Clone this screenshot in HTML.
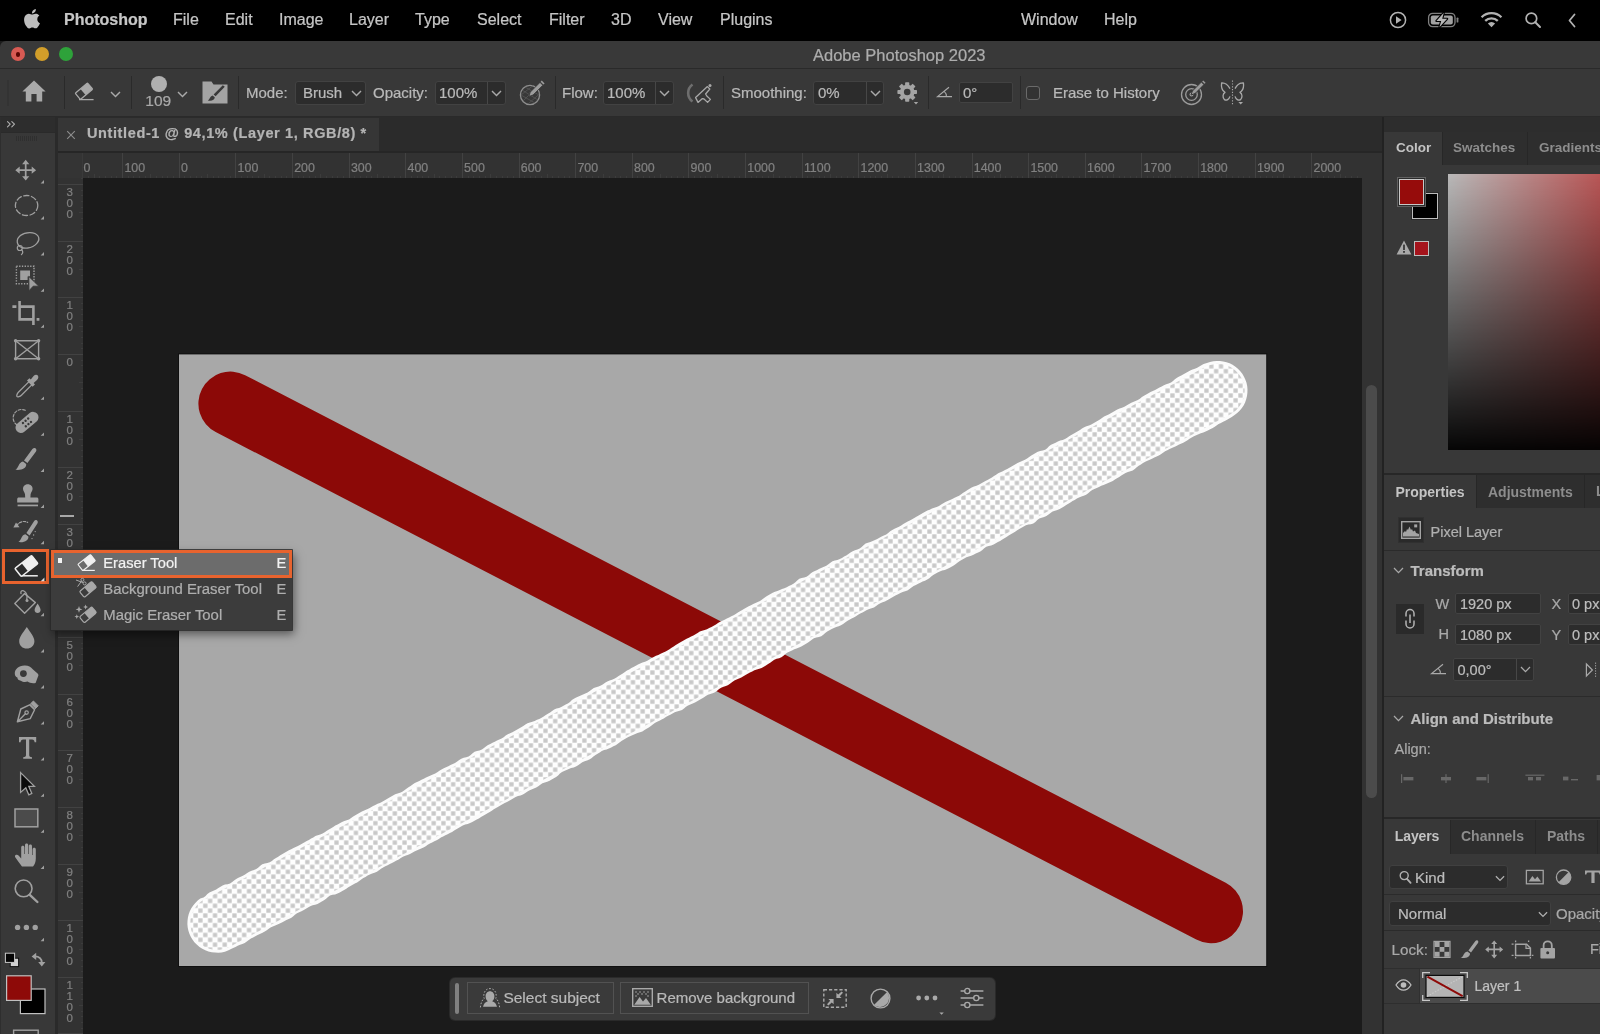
<!DOCTYPE html>
<html lang="en">
<head>
<meta charset="utf-8">
<title>Adobe Photoshop 2023</title>
<style>
*{box-sizing:border-box;margin:0;padding:0}
html,body{width:1600px;height:1034px;overflow:hidden;background:#1b1b1b}
body{position:relative;font-family:"Liberation Sans",sans-serif;color:#b4b4b4;font-size:14px;-webkit-font-smoothing:antialiased}
.a{position:absolute}
.t{position:absolute;white-space:nowrap;line-height:1;-webkit-text-stroke:0.22px currentColor}
svg{position:absolute;overflow:visible}
/* menu bar */
#menubar{left:0;top:0;width:1600px;height:41px;background:#000}
#menubar .t{top:12px;font-size:16px;color:#c6c6c6}
/* window */
#titlebar{left:0;top:41px;width:1600px;height:27px;background:#393939;border-top-left-radius:6px}
#optbar{left:0;top:69px;width:1600px;height:47px;background:#383838}
#optbar .t{font-size:15px;color:#b9b9b9;top:16px}
.box{position:absolute;background:#2c2c2c;border:1px solid #424242;border-radius:3px}
.sep{position:absolute;width:1px;top:7px;height:33px;background:#2a2a2a}
/* tool bar */
#tools{left:0;top:117px;width:55px;height:917px;background:#383838}
/* doc */
#tabbar{left:58px;top:117px;width:1324px;height:34px;background:#2b2b2b}
#tab{left:0;top:0.6px;width:321px;height:33.4px;background:#363636}
#hruler{left:58px;top:152.5px;width:1304px;height:25.5px;background:#323232;overflow:hidden}
#vruler{left:58px;top:178px;width:25px;height:856px;background:#323232;overflow:hidden}
#hruler .t,#vruler .t{font-size:12.4px;color:#808080}
#stage{left:83px;top:178px;width:1279px;height:856px;background:#1b1b1b;overflow:hidden}
#vscroll{left:1362px;top:152.5px;width:19.6px;height:882px;background:#323232}
/* panels */
#panels{left:1384.3px;top:117px;width:215.7px;height:917px;background:#383838;overflow:hidden}
.ptabs{position:absolute;left:-1px;width:217px;height:33px;background:#2e2e2e}
.ptab{position:absolute;top:0;height:33px;font-size:13.5px;font-weight:bold;color:#8d8d8d;line-height:32px;padding-left:11px;border-right:1px solid #272727}
.ptab.on{background:#383838;color:#c4c4c4}
</style>
</head>
<body>
<div id="root" style="position:absolute;left:0;top:0;width:1600px;height:1034px;will-change:transform">
<div id="menubar" class="a">
<svg style="left:23.6px;top:9px" width="16.4" height="19.4" viewBox="2.5 0 19.5 24"><path fill="#bdbdbd" d="M12.152 6.896c-.948 0-2.415-1.078-3.96-1.04-2.04.027-3.91 1.183-4.961 3.014-2.117 3.675-.546 9.103 1.519 12.09 1.013 1.454 2.208 3.09 3.792 3.039 1.52-.065 2.09-.987 3.935-.987 1.831 0 2.35.987 3.96.948 1.637-.026 2.676-1.48 3.676-2.948 1.156-1.688 1.636-3.325 1.662-3.415-.039-.013-3.182-1.221-3.22-4.857-.026-3.04 2.48-4.494 2.597-4.559-1.429-2.09-3.623-2.324-4.39-2.376-2-.156-3.675 1.09-4.61 1.09zM15.53 3.83c.843-1.012 1.4-2.427 1.245-3.83-1.207.052-2.662.805-3.532 1.818-.78.896-1.454 2.338-1.273 3.714 1.338.104 2.715-.688 3.559-1.701"/></svg>
<span class="t" style="left:64px;font-weight:bold;font-size:16px">Photoshop</span>
<span class="t" style="left:173px">File</span>
<span class="t" style="left:225px">Edit</span>
<span class="t" style="left:279px">Image</span>
<span class="t" style="left:349px">Layer</span>
<span class="t" style="left:415px">Type</span>
<span class="t" style="left:477px">Select</span>
<span class="t" style="left:549px">Filter</span>
<span class="t" style="left:611px">3D</span>
<span class="t" style="left:658px">View</span>
<span class="t" style="left:720px">Plugins</span>
<span class="t" style="left:1021px">Window</span>
<span class="t" style="left:1104px">Help</span>
<!-- status icons -->
<svg style="left:1388px;top:10px" width="20" height="20" viewBox="0 0 20 20"><circle cx="10" cy="10" r="7.6" fill="none" stroke="#b2b2b2" stroke-width="1.5"/><path d="M8 6.3 L13.6 10 L8 13.7Z" fill="#b2b2b2"/></svg>
<svg style="left:1427px;top:12px" width="34" height="16" viewBox="0 0 34 16"><rect x="1.600" y="1.400" width="26.400" height="13.200" rx="4" fill="none" stroke="#808080" stroke-width="1.300"/><rect x="3.800" y="3.600" width="22" height="8.800" rx="2" fill="#a2a2a2"/><rect x="29.600" y="5.400" width="1.800" height="5.200" rx="0.900" fill="#808080"/><path d="M16.800 0.800 L9.400 9 H14.200 L12.400 15.200 L20.200 6.800 H15.200 Z" fill="#000" stroke="#000" stroke-width="2.200" stroke-linejoin="round"/><path d="M16.800 0.800 L9.400 9 H14.200 L12.400 15.200 L20.200 6.800 H15.200 Z" fill="#b8b8b8"/></svg>
<svg style="left:1480px;top:11px" width="23" height="17" viewBox="0 0 23 17"><g fill="none" stroke="#b2b2b2" stroke-width="2.3" stroke-linecap="butt"><path d="M1.6 6.2 A14 14 0 0 1 21.4 6.2"/><path d="M5.2 9.9 A9 9 0 0 1 17.8 9.9"/></g><path d="M11.5 16.2 L7.9 12.6 A5 5 0 0 1 15.1 12.6Z" fill="#b2b2b2"/></svg>
<svg style="left:1524px;top:11px" width="18" height="18" viewBox="0 0 18 18"><circle cx="7.4" cy="7.4" r="5.3" fill="none" stroke="#b2b2b2" stroke-width="1.7"/><path d="M11.3 11.3 L16 16" stroke="#b2b2b2" stroke-width="2" stroke-linecap="round"/></svg>
<svg style="left:1567px;top:13px" width="10" height="15" viewBox="0 0 10 15"><path d="M7.5 1.5 L2.5 7.5 L7.5 13.5" fill="none" stroke="#b2b2b2" stroke-width="1.8" stroke-linecap="round" stroke-linejoin="round"/></svg>
</div>
<div id="titlebar" class="a">
<div class="a" style="left:11px;top:6.4px;width:14px;height:14px;border-radius:50%;background:#d85a53"></div>
<div class="a" style="left:15.8px;top:11.2px;width:4.4px;height:4.4px;border-radius:50%;background:#5a0503"></div>
<div class="a" style="left:34.9px;top:6.4px;width:14px;height:14px;border-radius:50%;background:#d29e2a"></div>
<div class="a" style="left:59.1px;top:6.4px;width:14px;height:14px;border-radius:50%;background:#2ea23a"></div>
<span class="t" style="left:813px;top:6px;font-size:16.5px;color:#adadad">Adobe Photoshop 2023</span>
</div>
<div class="a" style="left:0;top:68px;width:1600px;height:1px;background:#2a2a2a"></div>
<div class="a" style="left:0;top:116px;width:1600px;height:1px;background:#2a2a2a"></div>
<div id="optbar" class="a">
<div class="a" style="left:7px;top:11px;width:2px;height:26px;background:#333"></div>
<!-- home -->
<svg style="left:22px;top:11px" width="24" height="22" viewBox="0 0 24 22"><path fill="#a9a9a9" d="M12 0.6 L23.6 11.4 H20.2 V21.4 H14.6 V14 H9.4 V21.4 H3.8 V11.4 H0.4 Z"/></svg>
<div class="sep" style="left:64px"></div>
<!-- eraser -->
<svg style="left:75px;top:14px" width="20" height="18" viewBox="0 0 20 18"><g transform="rotate(-40 8 9)"><rect x="1.2" y="5" width="16" height="8" rx="0.8" fill="none" stroke="#a9a9a9" stroke-width="1.3"/><rect x="8" y="5" width="9.2" height="8" fill="#a9a9a9"/></g><path d="M4 16.6 H18.6" stroke="#a9a9a9" stroke-width="1.3"/></svg>
<svg style="left:110px;top:22px" width="11" height="7" viewBox="0 0 11 7"><path d="M1 1 L5.5 5.6 L10 1" fill="none" stroke="#a9a9a9" stroke-width="1.4"/></svg>
<div class="sep" style="left:131px"></div>
<div class="a" style="left:150.5px;top:6.5px;width:16px;height:16px;border-radius:50%;background:#b0b0b0"></div>
<span class="t" style="left:145.3px;top:23.8px;font-size:15.5px;color:#a9a9a9">109</span>
<svg style="left:177px;top:22px" width="11" height="7" viewBox="0 0 11 7"><path d="M1 1 L5.5 5.6 L10 1" fill="none" stroke="#a9a9a9" stroke-width="1.4"/></svg>
<!-- brush settings -->
<svg style="left:202px;top:12px" width="26" height="23" viewBox="0 0 26 23"><path fill="#a4a4a4" d="M0.5 0.5 H9.5 L11.5 3.5 H25.5 V22.5 H0.5 Z"/><path fill="#393939" d="M20.8 4.2 L22.8 5.8 L13.6 15.2 L11.6 13.6 Z M10.6 14.4 L12.8 16.2 C12.6 18.8 9.6 20.4 5.8 19.4 C7.8 18.6 7.8 15.2 10.6 14.4 Z"/></svg>
<div class="sep" style="left:238px"></div>
<span class="t" style="left:246px">Mode:</span>
<div class="box" style="left:295px;top:12px;width:71px;height:24px"></div>
<span class="t" style="left:303px">Brush</span>
<svg style="left:351px;top:21px" width="11" height="7" viewBox="0 0 11 7"><path d="M1 1 L5.5 5.6 L10 1" fill="none" stroke="#a9a9a9" stroke-width="1.4"/></svg>
<span class="t" style="left:373px">Opacity:</span>
<div class="box" style="left:435px;top:12px;width:71px;height:24px"></div>
<div class="a" style="left:487px;top:13px;width:1px;height:22px;background:#474747"></div>
<span class="t" style="left:439px">100%</span>
<svg style="left:491px;top:21px" width="11" height="7" viewBox="0 0 11 7"><path d="M1 1 L5.5 5.6 L10 1" fill="none" stroke="#a9a9a9" stroke-width="1.4"/></svg>
<!-- pressure opacity -->
<svg style="left:519px;top:11px" width="27" height="26" viewBox="0 0 27 26"><circle cx="11" cy="15" r="9.6" fill="none" stroke="#8f8f8f" stroke-width="1.3"/><path d="M3 10 L19 20 M2 15 L16 23 M6 7 L20 15 M4 21 L18 7 M2 15 L14 5.6 M9 24 L20.4 14" stroke="#5a5a5a" stroke-width="0.7"/><path d="M10 16.4 L11.2 12.2 L21 2.4 L23.8 5.2 L14 15 Z" fill="#9c9c9c" stroke="#393939" stroke-width="0.8"/><path d="M21.6 1.8 L22.8 0.6 L25.6 3.4 L24.4 4.6Z" fill="#9c9c9c"/></svg>
<div class="sep" style="left:555px"></div>
<span class="t" style="left:562px">Flow:</span>
<div class="box" style="left:603px;top:12px;width:71px;height:24px"></div>
<div class="a" style="left:655px;top:13px;width:1px;height:22px;background:#474747"></div>
<span class="t" style="left:607px">100%</span>
<svg style="left:659px;top:21px" width="11" height="7" viewBox="0 0 11 7"><path d="M1 1 L5.5 5.6 L10 1" fill="none" stroke="#a9a9a9" stroke-width="1.4"/></svg>
<!-- airbrush -->
<svg style="left:685px;top:13px" width="28" height="24" viewBox="0 0 28 24"><path d="M7.5 2.5 A10.5 10.5 0 0 0 7.5 19.5" fill="none" stroke="#6e6e6e" stroke-width="2.6"/><path d="M10.6 15.6 L22.4 4.6 L24.8 7 L20.6 12 L21.8 14 L25.4 17.4 L22.6 20.4 L19 17 L17.4 16.6 L13 20.4 Z" fill="none" stroke="#a9a9a9" stroke-width="1.3" stroke-linejoin="round"/><circle cx="25" cy="3.4" r="1.5" fill="#a9a9a9"/></svg>
<div class="sep" style="left:723px"></div>
<span class="t" style="left:731px">Smoothing:</span>
<div class="box" style="left:813px;top:12px;width:71px;height:24px"></div>
<div class="a" style="left:866px;top:13px;width:1px;height:22px;background:#474747"></div>
<span class="t" style="left:818px">0%</span>
<svg style="left:870px;top:21px" width="11" height="7" viewBox="0 0 11 7"><path d="M1 1 L5.5 5.6 L10 1" fill="none" stroke="#a9a9a9" stroke-width="1.4"/></svg>
<!-- gear -->
<svg style="left:897px;top:13px" width="22" height="23" viewBox="0 0 22 23"><g transform="translate(10.2 10)"><g fill="#a4a4a4"><rect x="-2.1" y="-9.8" width="4.2" height="19.6" rx="0.8"/><rect x="-2.1" y="-9.8" width="4.2" height="19.6" rx="0.8" transform="rotate(45)"/><rect x="-2.1" y="-9.8" width="4.2" height="19.6" rx="0.8" transform="rotate(90)"/><rect x="-2.1" y="-9.8" width="4.2" height="19.6" rx="0.8" transform="rotate(135)"/><circle r="7.3"/></g><circle r="3.3" fill="#393939"/></g><path d="M16.8 20 H21.2 L19 22.4Z" fill="#a4a4a4"/></svg>
<div class="sep" style="left:928px"></div>
<svg style="left:936px;top:17px" width="17" height="12" viewBox="0 0 17 12"><path d="M13 1.2 L1.6 10.6 H16" fill="none" stroke="#a9a9a9" stroke-width="1.2"/><path d="M8.2 5.4 A6.5 6.5 0 0 1 10.4 10.6" fill="none" stroke="#a9a9a9" stroke-width="1.1"/></svg>
<div class="box" style="left:959px;top:13px;width:54px;height:21px;border-radius:2px"></div>
<span class="t" style="left:963px">0°</span>
<div class="sep" style="left:1020px"></div>
<div class="a" style="left:1026px;top:17px;width:14px;height:14px;border:1px solid #6a6a6a;border-radius:3px;background:#333"></div>
<span class="t" style="left:1053px">Erase to History</span>
<!-- pressure size -->
<svg style="left:1180px;top:11px" width="26" height="26" viewBox="0 0 26 26"><circle cx="11.5" cy="14.5" r="10" fill="none" stroke="#9c9c9c" stroke-width="1.3"/><circle cx="11.5" cy="14.5" r="5.8" fill="none" stroke="#9c9c9c" stroke-width="1.3"/><circle cx="11.5" cy="14.5" r="2" fill="#9c9c9c"/><path d="M11 15 L12.4 11 L21.4 2 L24 4.6 L15 13.6 Z" fill="#9c9c9c" stroke="#393939" stroke-width="1"/><path d="M22.2 1.4 L23.2 0.4 L25.6 2.8 L24.6 3.8Z" fill="#9c9c9c"/></svg>
<!-- butterfly -->
<svg style="left:1220px;top:11px" width="25" height="26" viewBox="0 0 25 26"><g fill="none" stroke="#a9a9a9" stroke-width="1.3" stroke-linejoin="round"><path d="M10 8.6 C8 5 4.6 2.6 1.6 2.8 C1 7 2.2 10.6 5 12.4 C2.6 13.8 2.4 17.4 4.4 19.6 C6.6 21 9 19.4 10 16.4"/><path d="M15 8.6 C17 5 20.4 2.6 23.4 2.8 C24 7 22.8 10.6 20 12.4 C22.4 13.8 22.6 17.4 20.6 19.6 C18.4 21 16 19.4 15 16.4"/></g><path d="M12.5 0.6 V25" stroke="#a9a9a9" stroke-width="1.1" stroke-dasharray="1.2 1.6"/><path d="M18.4 22 H23 L20.7 24.4Z" fill="#a9a9a9"/></svg>
</div>
<div class="a" style="left:55px;top:117px;width:3px;height:917px;background:#2a2a2a"></div>
<div id="tabbar" class="a">
<div id="tab" class="a">
<svg style="left:8.2px;top:12.4px" width="10" height="10" viewBox="0 0 10 10"><path d="M1.2 1.2 L8.8 8.8 M8.8 1.2 L1.2 8.8" stroke="#8e8e8e" stroke-width="1.1"/></svg>
<span class="t" style="left:28.9px;top:8.9px;font-size:14.5px;font-weight:bold;color:#b4b4b4;letter-spacing:0.63px">Untitled-1 @ 94,1% (Layer 1, RGB/8) *</span>
</div>
</div>
<div class="a" style="left:58px;top:151px;width:1324px;height:2px;background:#262626"></div>
<div id="vscroll" class="a">
<div class="a" style="left:4.2px;top:232.5px;width:11.2px;height:413px;border-radius:6px;background:#4b4b4b"></div>
</div>
<div class="a" style="left:1381.5px;top:117px;width:2.8px;height:917px;background:#222"></div>
<div id="stage" class="a">
<svg style="left:0;top:0" width="1279" height="856" viewBox="83 178 1279 856">
<defs>
<pattern id="chk" x="173.7" y="354.2" width="9.72" height="9.72" patternUnits="userSpaceOnUse"><rect width="9.72" height="9.72" fill="#fefefe"/><rect x="0.3" y="5.16" width="4.26" height="4.26" fill="#c8c8c8"/><rect x="5.16" y="0.3" width="4.26" height="4.26" fill="#c8c8c8"/></pattern>
<clipPath id="cv"><rect x="179" y="354.4" width="1087.2" height="611.6"/></clipPath>
</defs>
<rect x="178" y="353.4" width="1089.2" height="613.6" fill="#101010"/>
<rect x="179" y="354.4" width="1087.2" height="611.6" fill="#a8a8a8"/>
<g clip-path="url(#cv)">
<line x1="230.4" y1="403.6" x2="1211" y2="911.2" stroke="#8c0907" stroke-width="64" stroke-linecap="round"/>
<path d="M231.0 949.1 L233.2 948.0 L235.5 946.9 L237.7 945.8 L240.0 944.8 L242.4 943.9 L244.7 942.9 L246.8 941.5 L248.8 940.0 L250.9 938.6 L253.1 937.4 L255.3 936.3 L257.6 935.1 L259.8 934.0 L262.0 932.9 L264.3 931.7 L266.4 930.4 L268.4 928.9 L270.5 927.5 L272.8 926.5 L275.2 925.6 L277.5 924.6 L279.7 923.4 L281.9 922.4 L284.2 921.2 L286.4 920.1 L288.7 919.1 L291.0 918.0 L293.0 916.5 L294.9 914.7 L297.0 913.3 L299.2 912.2 L301.5 911.2 L303.8 910.1 L305.9 908.8 L308.0 907.5 L310.2 906.2 L312.6 905.3 L315.1 904.8 L317.5 903.9 L319.7 902.7 L321.8 901.4 L324.0 900.2 L326.1 898.7 L328.0 897.0 L330.0 895.6 L332.5 894.8 L335.1 894.4 L337.5 893.6 L339.7 892.4 L341.9 891.2 L344.1 890.1 L346.3 888.8 L348.3 887.3 L350.5 886.0 L352.7 884.8 L354.9 883.6 L357.1 882.4 L359.2 881.1 L361.2 879.5 L363.3 878.1 L365.5 876.9 L367.6 875.6 L369.8 874.4 L372.1 873.4 L374.5 872.7 L376.9 871.7 L379.0 870.3 L381.0 868.8 L383.1 867.4 L385.3 866.3 L387.6 865.2 L389.8 864.1 L392.0 862.9 L394.3 861.8 L396.5 860.6 L398.7 859.4 L400.8 858.0 L402.9 856.8 L405.2 855.8 L407.6 855.0 L410.0 854.0 L412.2 852.8 L414.4 851.6 L416.6 850.4 L418.9 849.4 L421.2 848.6 L423.5 847.5 L425.7 846.2 L427.7 844.8 L429.9 843.5 L432.1 842.4 L434.4 841.3 L436.6 840.2 L438.8 838.9 L440.9 837.6 L443.1 836.4 L445.4 835.3 L447.6 834.2 L449.9 833.1 L452.1 831.9 L454.2 830.5 L456.3 829.3 L458.5 828.0 L460.6 826.7 L462.8 825.4 L465.2 824.6 L467.7 824.0 L470.1 823.1 L472.3 821.9 L474.5 820.8 L476.7 819.6 L478.9 818.4 L481.0 817.0 L483.2 815.8 L485.4 814.6 L487.5 813.3 L489.7 812.1 L491.8 810.7 L493.8 809.2 L496.0 807.9 L498.2 806.7 L500.3 805.4 L502.5 804.2 L504.7 803.1 L507.0 801.9 L509.2 800.8 L511.4 799.5 L513.5 798.2 L515.6 796.9 L518.0 796.0 L520.5 795.4 L522.9 794.5 L525.0 793.2 L527.1 791.7 L529.2 790.4 L531.5 789.4 L533.9 788.6 L536.2 787.6 L538.3 786.2 L540.3 784.7 L542.4 783.3 L544.8 782.4 L547.2 781.7 L549.6 780.7 L551.7 779.5 L553.9 778.3 L556.1 777.0 L558.1 775.5 L559.9 773.6 L562.0 772.1 L564.2 771.0 L566.5 770.0 L568.8 768.9 L571.1 768.0 L573.7 767.4 L576.0 766.6 L578.1 765.2 L580.2 763.7 L582.3 762.3 L584.6 761.3 L587.0 760.6 L589.3 759.6 L591.4 758.2 L593.4 756.5 L595.5 755.1 L597.6 753.8 L599.7 752.4 L601.8 751.1 L604.1 750.1 L606.6 749.4 L608.9 748.5 L611.2 747.4 L613.4 746.3 L615.7 745.2 L617.8 743.8 L619.8 742.2 L621.8 740.8 L624.0 739.6 L626.1 738.2 L628.3 737.0 L630.6 735.9 L632.9 734.9 L635.2 733.9 L637.5 733.0 L640.0 732.3 L642.3 731.4 L644.5 730.1 L646.6 728.8 L648.8 727.5 L650.9 726.1 L652.8 724.4 L654.8 722.9 L657.1 721.8 L659.4 720.7 L661.6 719.6 L663.8 718.4 L665.9 717.1 L668.1 715.8 L670.3 714.7 L672.5 713.4 L674.7 712.3 L677.0 711.4 L679.6 710.8 L682.0 710.0 L684.0 708.5 L686.0 706.8 L688.0 705.4 L690.3 704.4 L692.7 703.5 L695.0 702.5 L697.2 701.3 L699.3 700.0 L701.5 698.8 L703.7 697.5 L705.8 696.1 L707.9 694.8 L710.3 693.9 L712.7 693.2 L715.0 692.2 L717.1 690.8 L719.1 689.1 L721.1 687.7 L723.5 686.7 L725.9 686.0 L728.2 685.0 L730.3 683.6 L732.3 682.0 L734.4 680.6 L736.6 679.6 L739.0 678.6 L741.3 677.6 L743.4 676.3 L745.5 675.0 L747.7 673.7 L749.9 672.6 L752.2 671.4 L754.4 670.3 L756.8 669.4 L759.3 668.8 L761.6 667.9 L763.8 666.7 L765.9 665.4 L768.1 664.1 L770.2 662.8 L772.2 661.2 L774.3 659.8 L776.6 658.8 L779.1 658.2 L781.4 657.2 L783.5 655.8 L785.4 654.0 L787.5 652.6 L789.7 651.5 L792.0 650.4 L794.3 649.3 L796.6 648.4 L799.0 647.6 L801.3 646.6 L803.5 645.3 L805.6 644.0 L807.7 642.7 L809.8 641.3 L811.8 639.7 L813.9 638.3 L816.3 637.5 L818.9 637.0 L821.3 636.2 L823.3 634.7 L825.2 632.9 L827.2 631.4 L829.5 630.3 L831.7 629.1 L833.9 628.0 L836.2 627.0 L838.7 626.3 L841.0 625.3 L843.1 623.9 L845.1 622.4 L847.2 621.0 L849.4 619.8 L851.6 618.6 L853.8 617.5 L856.0 616.2 L858.1 614.8 L860.2 613.6 L862.5 612.4 L864.7 611.2 L866.9 610.1 L869.2 609.1 L871.6 608.3 L874.0 607.4 L876.1 606.0 L878.1 604.6 L880.3 603.3 L882.6 602.2 L884.9 601.4 L887.2 600.3 L889.4 599.1 L891.5 597.7 L893.7 596.4 L895.9 595.3 L898.1 594.2 L900.4 593.0 L902.7 592.1 L905.1 591.3 L907.4 590.4 L909.5 589.0 L911.5 587.4 L913.6 586.0 L915.9 584.9 L918.1 583.8 L920.3 582.7 L922.6 581.6 L925.0 580.7 L927.2 579.6 L929.3 578.2 L931.2 576.4 L933.2 575.0 L935.4 573.8 L937.6 572.6 L939.8 571.4 L942.2 570.5 L944.8 570.0 L947.1 569.1 L949.3 567.9 L951.5 566.7 L953.7 565.4 L955.8 564.0 L957.7 562.4 L959.8 561.0 L962.0 559.8 L964.2 558.5 L966.4 557.3 L968.7 556.4 L971.2 555.7 L973.5 554.7 L975.8 553.6 L978.1 552.6 L980.3 551.5 L982.4 550.1 L984.2 548.3 L986.3 546.8 L988.7 545.9 L991.2 545.4 L993.6 544.5 L995.8 543.3 L997.9 542.1 L1000.1 540.9 L1002.3 539.6 L1004.4 538.2 L1006.5 536.9 L1008.7 535.6 L1010.8 534.3 L1013.0 533.0 L1015.1 531.7 L1017.2 530.3 L1019.3 529.0 L1021.5 527.8 L1023.7 526.5 L1025.9 525.3 L1028.3 524.6 L1030.9 524.2 L1033.3 523.4 L1035.4 521.9 L1037.3 520.1 L1039.3 518.6 L1041.6 517.7 L1044.1 516.9 L1046.4 515.9 L1048.5 514.5 L1050.5 513.0 L1052.6 511.6 L1054.9 510.7 L1057.4 510.0 L1059.7 509.0 L1061.9 507.8 L1064.0 506.4 L1066.2 505.1 L1068.3 503.8 L1070.4 502.4 L1072.5 501.1 L1074.7 499.9 L1076.9 498.6 L1079.0 497.4 L1081.4 496.4 L1083.8 495.7 L1086.1 494.8 L1088.2 493.3 L1090.1 491.6 L1092.2 490.1 L1094.4 489.0 L1096.7 488.0 L1099.0 486.9 L1101.2 485.8 L1103.6 484.9 L1105.9 483.9 L1108.2 482.9 L1110.5 481.9 L1112.8 480.9 L1114.9 479.6 L1117.0 478.2 L1119.2 477.0 L1121.3 475.6 L1123.4 474.2 L1125.5 472.9 L1127.9 472.0 L1130.4 471.3 L1132.7 470.4 L1134.8 468.9 L1136.7 467.2 L1138.7 465.7 L1140.9 464.4 L1143.0 463.1 L1145.2 461.8 L1147.4 460.8 L1149.8 459.8 L1152.0 458.7 L1154.3 457.6 L1156.6 456.6 L1158.8 455.5 L1160.9 454.2 L1163.0 452.7 L1165.1 451.3 L1167.3 450.2 L1169.6 449.1 L1171.8 448.0 L1174.1 446.9 L1176.4 445.9 L1178.6 444.8 L1180.9 443.7 L1183.2 442.7 L1185.4 441.6 L1187.5 440.3 L1189.5 438.7 L1191.7 437.4 L1193.9 436.3 L1196.2 435.3 L1198.5 434.2 L1200.8 433.3 L1203.3 432.5 L1205.6 431.6 L1207.8 430.4 L1210.1 429.3 L1212.3 428.2 L1214.4 426.9 L1216.5 425.4 L1218.6 424.1 L1220.9 423.0 L1223.1 421.8 L1225.3 420.7 L1227.5 419.4 L1229.6 418.2 L1231.8 417.0 L1234.6 415.1 L1237.2 413.1 L1239.6 410.7 L1241.7 408.2 L1243.6 405.4 L1245.1 402.4 L1246.2 399.3 L1247.0 396.0 L1247.4 392.7 L1247.5 389.4 L1247.2 386.1 L1246.5 382.8 L1245.4 379.7 L1244.0 376.7 L1242.3 373.8 L1240.3 371.2 L1237.9 368.8 L1235.4 366.7 L1232.6 364.8 L1229.6 363.3 L1226.5 362.2 L1223.2 361.4 L1219.9 361.0 L1216.6 360.9 L1213.3 361.2 L1210.0 361.9 L1206.9 363.0 L1203.6 363.9 L1201.4 365.2 L1199.3 366.6 L1197.2 367.8 L1194.9 368.8 L1192.5 369.6 L1190.2 370.6 L1188.0 371.8 L1185.7 373.0 L1183.5 374.2 L1181.3 375.4 L1179.2 376.6 L1177.0 377.8 L1174.9 379.3 L1173.0 381.0 L1171.0 382.5 L1168.6 383.5 L1166.2 384.2 L1163.9 385.2 L1161.7 386.4 L1159.5 387.6 L1157.3 388.8 L1155.1 389.9 L1152.8 391.0 L1150.5 392.1 L1148.4 393.3 L1146.2 394.5 L1144.0 395.7 L1141.9 397.1 L1139.9 398.7 L1137.8 400.1 L1135.5 401.1 L1133.1 401.9 L1130.8 402.9 L1128.6 404.2 L1126.5 405.5 L1124.4 406.8 L1122.0 407.7 L1119.6 408.5 L1117.3 409.5 L1115.1 410.7 L1113.0 412.0 L1110.8 413.2 L1108.6 414.4 L1106.3 415.5 L1104.1 416.6 L1102.0 417.9 L1099.9 419.4 L1097.8 420.7 L1095.6 421.9 L1093.5 423.3 L1091.3 424.5 L1089.0 425.5 L1086.5 426.2 L1084.2 427.2 L1082.0 428.5 L1080.0 429.9 L1077.8 431.2 L1075.7 432.4 L1073.5 433.7 L1071.3 435.0 L1069.2 436.3 L1067.1 437.7 L1065.0 439.0 L1062.7 440.0 L1060.2 440.6 L1057.9 441.6 L1055.6 442.7 L1053.3 443.7 L1051.0 444.7 L1049.0 446.3 L1047.2 448.2 L1045.2 449.7 L1042.8 450.5 L1040.2 451.0 L1037.8 451.8 L1035.6 453.1 L1033.5 454.3 L1031.3 455.6 L1029.2 456.9 L1027.1 458.4 L1025.0 459.8 L1022.7 460.8 L1020.4 461.7 L1018.1 462.7 L1015.9 463.9 L1013.7 465.2 L1011.6 466.4 L1009.4 467.7 L1007.2 468.9 L1005.0 470.1 L1002.8 471.2 L1000.5 472.2 L998.2 473.3 L996.1 474.7 L994.0 476.1 L991.9 477.5 L989.7 478.7 L987.5 479.9 L985.4 481.1 L983.2 482.3 L981.0 483.6 L978.8 484.8 L976.5 485.7 L974.0 486.5 L971.7 487.4 L969.6 488.7 L967.5 490.1 L965.3 491.4 L963.2 492.7 L961.2 494.3 L959.1 495.7 L956.8 496.8 L954.6 497.8 L952.3 498.9 L950.0 500.0 L947.7 500.9 L945.4 501.9 L943.3 503.2 L941.2 504.6 L939.0 505.9 L936.7 506.9 L934.3 507.7 L932.0 508.6 L929.7 509.7 L927.4 510.6 L925.1 511.7 L922.9 512.9 L920.8 514.2 L918.6 515.5 L916.4 516.7 L914.3 518.0 L912.1 519.3 L909.9 520.4 L907.7 521.6 L905.5 522.8 L903.3 524.1 L901.2 525.4 L899.0 526.7 L896.8 527.8 L894.5 528.8 L892.3 529.9 L890.2 531.3 L888.2 533.0 L886.2 534.4 L883.9 535.5 L881.7 536.6 L879.4 537.7 L877.2 538.9 L875.0 540.0 L872.7 541.1 L870.4 542.0 L867.9 542.7 L865.6 543.6 L863.5 545.2 L861.7 547.0 L859.7 548.5 L857.4 549.5 L855.0 550.3 L852.7 551.3 L850.5 552.6 L848.4 554.1 L846.3 555.4 L844.1 556.6 L842.0 557.9 L839.8 559.1 L837.4 560.0 L834.9 560.5 L832.5 561.3 L830.4 562.7 L828.4 564.3 L826.3 565.7 L824.0 566.7 L821.7 567.7 L819.4 568.8 L817.2 569.9 L814.9 570.9 L812.7 572.1 L810.6 573.5 L808.7 575.2 L806.6 576.7 L804.2 577.5 L801.7 578.0 L799.3 578.8 L797.2 580.4 L795.4 582.2 L793.4 583.8 L791.2 584.9 L788.9 586.1 L786.7 587.2 L784.4 588.2 L782.0 589.1 L779.8 590.1 L777.4 591.1 L775.0 591.8 L772.7 592.8 L770.5 594.0 L768.3 595.3 L766.2 596.5 L764.1 597.9 L762.1 599.5 L760.0 600.9 L757.7 602.0 L755.5 603.0 L753.2 604.1 L751.0 605.3 L748.7 606.3 L746.5 607.5 L744.3 608.7 L742.2 610.1 L740.0 611.3 L737.9 612.6 L735.7 613.9 L733.6 615.2 L731.4 616.3 L729.1 617.5 L726.9 618.6 L724.6 619.7 L722.4 620.7 L720.1 621.8 L718.0 623.1 L715.9 624.6 L713.7 625.8 L711.5 627.0 L709.2 628.1 L707.0 629.2 L704.7 630.1 L702.1 630.7 L699.8 631.6 L697.6 632.9 L695.5 634.2 L693.4 635.5 L691.1 636.6 L688.9 637.7 L686.6 638.8 L684.4 640.0 L682.2 641.2 L680.0 642.4 L677.9 643.7 L675.8 645.1 L673.7 646.5 L671.6 647.8 L669.5 649.3 L667.4 650.6 L665.1 651.7 L662.8 652.7 L660.6 653.8 L658.3 654.9 L656.0 655.8 L653.7 656.9 L651.6 658.1 L649.4 659.5 L647.3 660.7 L645.0 661.7 L642.5 662.5 L640.2 663.4 L638.0 664.6 L635.8 665.7 L633.5 666.9 L631.4 668.1 L629.2 669.4 L627.0 670.6 L624.9 671.9 L622.8 673.4 L620.7 674.8 L618.6 676.0 L616.5 677.4 L614.3 678.7 L612.0 679.7 L609.6 680.4 L607.3 681.4 L605.1 682.7 L603.1 684.2 L600.9 685.5 L598.6 686.5 L596.1 687.2 L593.8 688.1 L591.7 689.5 L589.7 691.0 L587.6 692.4 L585.3 693.5 L583.0 694.5 L580.8 695.5 L578.5 696.6 L576.2 697.6 L573.9 698.7 L571.9 700.1 L570.0 701.9 L567.9 703.4 L565.7 704.6 L563.5 705.7 L561.3 706.9 L559.0 707.9 L556.5 708.6 L554.2 709.6 L552.1 710.9 L550.1 712.4 L547.9 713.8 L545.8 715.1 L543.7 716.5 L541.6 717.8 L539.3 718.9 L537.0 719.8 L534.7 720.9 L532.4 721.8 L529.9 722.4 L527.5 723.3 L525.4 724.6 L523.3 726.0 L521.2 727.3 L519.0 728.6 L516.8 729.8 L514.6 731.1 L512.4 732.2 L510.1 733.2 L507.8 734.3 L505.7 735.6 L503.7 737.2 L501.6 738.6 L499.3 739.6 L497.0 740.6 L494.8 741.7 L492.5 742.8 L490.3 743.9 L488.0 745.0 L485.9 746.4 L484.0 748.1 L481.9 749.5 L479.5 750.4 L477.0 750.9 L474.6 751.8 L472.6 753.3 L470.7 755.0 L468.6 756.4 L466.2 757.3 L463.7 757.8 L461.3 758.7 L459.2 760.0 L457.2 761.6 L455.0 762.9 L452.8 764.0 L450.5 765.1 L448.3 766.2 L446.0 767.3 L443.8 768.3 L441.5 769.5 L439.4 770.8 L437.3 772.2 L435.2 773.6 L432.9 774.6 L430.6 775.5 L428.3 776.5 L426.0 777.6 L423.8 778.7 L421.5 779.8 L419.3 780.9 L417.0 782.0 L414.8 783.1 L412.6 784.4 L410.6 785.9 L408.5 787.2 L406.4 788.7 L404.4 790.3 L402.3 791.7 L400.0 792.7 L397.6 793.4 L395.2 794.3 L393.0 795.5 L390.8 796.7 L388.6 797.9 L386.5 799.2 L384.4 800.5 L382.2 801.8 L379.9 802.9 L377.6 803.8 L375.3 804.9 L373.1 806.1 L371.0 807.3 L368.8 808.5 L366.5 809.6 L364.2 810.5 L361.9 811.6 L359.7 812.8 L357.5 814.0 L355.3 815.2 L353.2 816.5 L351.1 818.0 L349.0 819.4 L346.7 820.3 L344.3 821.1 L342.0 822.1 L339.8 823.3 L337.6 824.4 L335.3 825.6 L333.2 826.9 L331.1 828.2 L328.9 829.5 L326.8 830.8 L324.7 832.2 L322.6 833.6 L320.2 834.5 L317.8 835.2 L315.4 836.1 L313.3 837.4 L311.1 838.6 L308.9 839.9 L306.7 841.1 L304.6 842.3 L302.4 843.6 L300.2 844.7 L297.9 845.9 L295.7 847.0 L293.5 848.1 L291.2 849.2 L288.9 850.3 L286.8 851.5 L284.6 852.8 L282.5 854.1 L280.3 855.3 L278.2 856.7 L276.0 857.9 L273.9 859.3 L271.9 860.9 L269.8 862.2 L267.4 863.0 L264.8 863.4 L262.3 864.2 L260.3 865.7 L258.4 867.4 L256.3 868.9 L254.0 869.9 L251.6 870.7 L249.3 871.7 L247.2 873.0 L245.1 874.4 L242.9 875.7 L240.7 876.8 L238.4 877.8 L236.2 878.9 L234.1 880.4 L232.2 882.0 L230.1 883.5 L227.7 884.3 L225.0 884.6 L222.6 885.4 L220.5 886.7 L218.4 888.1 L216.2 889.4 L214.0 890.5 L211.7 891.5 L209.4 892.6 L207.4 894.1 L205.6 896.0 L203.6 897.6 L200.3 898.5 L197.7 900.5 L195.3 902.9 L193.2 905.4 L191.3 908.2 L189.8 911.2 L188.7 914.3 L187.9 917.6 L187.5 920.9 L187.4 924.2 L187.7 927.5 L188.4 930.8 L189.5 933.9 L190.9 936.9 L192.6 939.8 L194.6 942.4 L197.0 944.8 L199.5 946.9 L202.3 948.8 L205.3 950.3 L208.4 951.4 L211.7 952.2 L215.0 952.6 L218.3 952.7 L221.6 952.4 L224.9 951.7 L228.0 950.6Z" fill="#fbfbfb"/>
<line x1="217.1" y1="923" x2="1217.8" y2="390.6" stroke="url(#chk)" stroke-width="53.6" stroke-linecap="round"/>
</g>
</svg>
</div>
<div id="hruler" class="a">
<div class="a" style="left:64.1px;top:0;width:1px;height:26px;background:#424242"></div>
<span class="t" style="left:66.4px;top:9.2px">100</span>
<div class="a" style="left:120.7px;top:0;width:1px;height:26px;background:#424242"></div>
<span class="t" style="left:123.0px;top:9.2px">0</span>
<div class="a" style="left:177.3px;top:0;width:1px;height:26px;background:#424242"></div>
<span class="t" style="left:179.6px;top:9.2px">100</span>
<div class="a" style="left:233.9px;top:0;width:1px;height:26px;background:#424242"></div>
<span class="t" style="left:236.2px;top:9.2px">200</span>
<div class="a" style="left:290.6px;top:0;width:1px;height:26px;background:#424242"></div>
<span class="t" style="left:292.9px;top:9.2px">300</span>
<div class="a" style="left:347.2px;top:0;width:1px;height:26px;background:#424242"></div>
<span class="t" style="left:349.5px;top:9.2px">400</span>
<div class="a" style="left:403.8px;top:0;width:1px;height:26px;background:#424242"></div>
<span class="t" style="left:406.1px;top:9.2px">500</span>
<div class="a" style="left:460.5px;top:0;width:1px;height:26px;background:#424242"></div>
<span class="t" style="left:462.8px;top:9.2px">600</span>
<div class="a" style="left:517.1px;top:0;width:1px;height:26px;background:#424242"></div>
<span class="t" style="left:519.4px;top:9.2px">700</span>
<div class="a" style="left:573.7px;top:0;width:1px;height:26px;background:#424242"></div>
<span class="t" style="left:576.0px;top:9.2px">800</span>
<div class="a" style="left:630.3px;top:0;width:1px;height:26px;background:#424242"></div>
<span class="t" style="left:632.6px;top:9.2px">900</span>
<div class="a" style="left:687.0px;top:0;width:1px;height:26px;background:#424242"></div>
<span class="t" style="left:689.3px;top:9.2px">1000</span>
<div class="a" style="left:743.6px;top:0;width:1px;height:26px;background:#424242"></div>
<span class="t" style="left:745.9px;top:9.2px">1100</span>
<div class="a" style="left:800.2px;top:0;width:1px;height:26px;background:#424242"></div>
<span class="t" style="left:802.5px;top:9.2px">1200</span>
<div class="a" style="left:856.8px;top:0;width:1px;height:26px;background:#424242"></div>
<span class="t" style="left:859.1px;top:9.2px">1300</span>
<div class="a" style="left:913.5px;top:0;width:1px;height:26px;background:#424242"></div>
<span class="t" style="left:915.8px;top:9.2px">1400</span>
<div class="a" style="left:970.1px;top:0;width:1px;height:26px;background:#424242"></div>
<span class="t" style="left:972.4px;top:9.2px">1500</span>
<div class="a" style="left:1026.7px;top:0;width:1px;height:26px;background:#424242"></div>
<span class="t" style="left:1029.0px;top:9.2px">1600</span>
<div class="a" style="left:1083.3px;top:0;width:1px;height:26px;background:#424242"></div>
<span class="t" style="left:1085.6px;top:9.2px">1700</span>
<div class="a" style="left:1140.0px;top:0;width:1px;height:26px;background:#424242"></div>
<span class="t" style="left:1142.2px;top:9.2px">1800</span>
<div class="a" style="left:1196.6px;top:0;width:1px;height:26px;background:#424242"></div>
<span class="t" style="left:1198.9px;top:9.2px">1900</span>
<div class="a" style="left:1253.2px;top:0;width:1px;height:26px;background:#424242"></div>
<span class="t" style="left:1255.5px;top:9.2px">2000</span>
<div class="a" style="left:1309.8px;top:0;width:1px;height:26px;background:#424242"></div>
<span class="t" style="left:1312.1px;top:9.2px">2100</span>
<div class="a" style="left:30.1px;top:23.5px;width:1px;height:2px;background:#3c3c3c"></div>
<div class="a" style="left:35.8px;top:21.5px;width:1px;height:4px;background:#3c3c3c"></div>
<div class="a" style="left:41.4px;top:23.5px;width:1px;height:2px;background:#3c3c3c"></div>
<div class="a" style="left:47.1px;top:23.5px;width:1px;height:2px;background:#3c3c3c"></div>
<div class="a" style="left:52.7px;top:23.5px;width:1px;height:2px;background:#3c3c3c"></div>
<div class="a" style="left:58.4px;top:23.5px;width:1px;height:2px;background:#3c3c3c"></div>
<div class="a" style="left:69.7px;top:23.5px;width:1px;height:2px;background:#3c3c3c"></div>
<div class="a" style="left:75.4px;top:23.5px;width:1px;height:2px;background:#3c3c3c"></div>
<div class="a" style="left:81.1px;top:23.5px;width:1px;height:2px;background:#3c3c3c"></div>
<div class="a" style="left:86.7px;top:23.5px;width:1px;height:2px;background:#3c3c3c"></div>
<div class="a" style="left:92.4px;top:21.5px;width:1px;height:4px;background:#3c3c3c"></div>
<div class="a" style="left:98.1px;top:23.5px;width:1px;height:2px;background:#3c3c3c"></div>
<div class="a" style="left:103.7px;top:23.5px;width:1px;height:2px;background:#3c3c3c"></div>
<div class="a" style="left:109.4px;top:23.5px;width:1px;height:2px;background:#3c3c3c"></div>
<div class="a" style="left:115.0px;top:23.5px;width:1px;height:2px;background:#3c3c3c"></div>
<div class="a" style="left:126.4px;top:23.5px;width:1px;height:2px;background:#3c3c3c"></div>
<div class="a" style="left:132.0px;top:23.5px;width:1px;height:2px;background:#3c3c3c"></div>
<div class="a" style="left:137.7px;top:23.5px;width:1px;height:2px;background:#3c3c3c"></div>
<div class="a" style="left:143.3px;top:23.5px;width:1px;height:2px;background:#3c3c3c"></div>
<div class="a" style="left:149.0px;top:21.5px;width:1px;height:4px;background:#3c3c3c"></div>
<div class="a" style="left:154.7px;top:23.5px;width:1px;height:2px;background:#3c3c3c"></div>
<div class="a" style="left:160.3px;top:23.5px;width:1px;height:2px;background:#3c3c3c"></div>
<div class="a" style="left:166.0px;top:23.5px;width:1px;height:2px;background:#3c3c3c"></div>
<div class="a" style="left:171.7px;top:23.5px;width:1px;height:2px;background:#3c3c3c"></div>
<div class="a" style="left:183.0px;top:23.5px;width:1px;height:2px;background:#3c3c3c"></div>
<div class="a" style="left:188.6px;top:23.5px;width:1px;height:2px;background:#3c3c3c"></div>
<div class="a" style="left:194.3px;top:23.5px;width:1px;height:2px;background:#3c3c3c"></div>
<div class="a" style="left:200.0px;top:23.5px;width:1px;height:2px;background:#3c3c3c"></div>
<div class="a" style="left:205.6px;top:21.5px;width:1px;height:4px;background:#3c3c3c"></div>
<div class="a" style="left:211.3px;top:23.5px;width:1px;height:2px;background:#3c3c3c"></div>
<div class="a" style="left:217.0px;top:23.5px;width:1px;height:2px;background:#3c3c3c"></div>
<div class="a" style="left:222.6px;top:23.5px;width:1px;height:2px;background:#3c3c3c"></div>
<div class="a" style="left:228.3px;top:23.5px;width:1px;height:2px;background:#3c3c3c"></div>
<div class="a" style="left:239.6px;top:23.5px;width:1px;height:2px;background:#3c3c3c"></div>
<div class="a" style="left:245.3px;top:23.5px;width:1px;height:2px;background:#3c3c3c"></div>
<div class="a" style="left:250.9px;top:23.5px;width:1px;height:2px;background:#3c3c3c"></div>
<div class="a" style="left:256.6px;top:23.5px;width:1px;height:2px;background:#3c3c3c"></div>
<div class="a" style="left:262.3px;top:21.5px;width:1px;height:4px;background:#3c3c3c"></div>
<div class="a" style="left:267.9px;top:23.5px;width:1px;height:2px;background:#3c3c3c"></div>
<div class="a" style="left:273.6px;top:23.5px;width:1px;height:2px;background:#3c3c3c"></div>
<div class="a" style="left:279.2px;top:23.5px;width:1px;height:2px;background:#3c3c3c"></div>
<div class="a" style="left:284.9px;top:23.5px;width:1px;height:2px;background:#3c3c3c"></div>
<div class="a" style="left:296.2px;top:23.5px;width:1px;height:2px;background:#3c3c3c"></div>
<div class="a" style="left:301.9px;top:23.5px;width:1px;height:2px;background:#3c3c3c"></div>
<div class="a" style="left:307.6px;top:23.5px;width:1px;height:2px;background:#3c3c3c"></div>
<div class="a" style="left:313.2px;top:23.5px;width:1px;height:2px;background:#3c3c3c"></div>
<div class="a" style="left:318.9px;top:21.5px;width:1px;height:4px;background:#3c3c3c"></div>
<div class="a" style="left:324.6px;top:23.5px;width:1px;height:2px;background:#3c3c3c"></div>
<div class="a" style="left:330.2px;top:23.5px;width:1px;height:2px;background:#3c3c3c"></div>
<div class="a" style="left:335.9px;top:23.5px;width:1px;height:2px;background:#3c3c3c"></div>
<div class="a" style="left:341.5px;top:23.5px;width:1px;height:2px;background:#3c3c3c"></div>
<div class="a" style="left:352.9px;top:23.5px;width:1px;height:2px;background:#3c3c3c"></div>
<div class="a" style="left:358.5px;top:23.5px;width:1px;height:2px;background:#3c3c3c"></div>
<div class="a" style="left:364.2px;top:23.5px;width:1px;height:2px;background:#3c3c3c"></div>
<div class="a" style="left:369.9px;top:23.5px;width:1px;height:2px;background:#3c3c3c"></div>
<div class="a" style="left:375.5px;top:21.5px;width:1px;height:4px;background:#3c3c3c"></div>
<div class="a" style="left:381.2px;top:23.5px;width:1px;height:2px;background:#3c3c3c"></div>
<div class="a" style="left:386.8px;top:23.5px;width:1px;height:2px;background:#3c3c3c"></div>
<div class="a" style="left:392.5px;top:23.5px;width:1px;height:2px;background:#3c3c3c"></div>
<div class="a" style="left:398.2px;top:23.5px;width:1px;height:2px;background:#3c3c3c"></div>
<div class="a" style="left:409.5px;top:23.5px;width:1px;height:2px;background:#3c3c3c"></div>
<div class="a" style="left:415.2px;top:23.5px;width:1px;height:2px;background:#3c3c3c"></div>
<div class="a" style="left:420.8px;top:23.5px;width:1px;height:2px;background:#3c3c3c"></div>
<div class="a" style="left:426.5px;top:23.5px;width:1px;height:2px;background:#3c3c3c"></div>
<div class="a" style="left:432.1px;top:21.5px;width:1px;height:4px;background:#3c3c3c"></div>
<div class="a" style="left:437.8px;top:23.5px;width:1px;height:2px;background:#3c3c3c"></div>
<div class="a" style="left:443.5px;top:23.5px;width:1px;height:2px;background:#3c3c3c"></div>
<div class="a" style="left:449.1px;top:23.5px;width:1px;height:2px;background:#3c3c3c"></div>
<div class="a" style="left:454.8px;top:23.5px;width:1px;height:2px;background:#3c3c3c"></div>
<div class="a" style="left:466.1px;top:23.5px;width:1px;height:2px;background:#3c3c3c"></div>
<div class="a" style="left:471.8px;top:23.5px;width:1px;height:2px;background:#3c3c3c"></div>
<div class="a" style="left:477.4px;top:23.5px;width:1px;height:2px;background:#3c3c3c"></div>
<div class="a" style="left:483.1px;top:23.5px;width:1px;height:2px;background:#3c3c3c"></div>
<div class="a" style="left:488.8px;top:21.5px;width:1px;height:4px;background:#3c3c3c"></div>
<div class="a" style="left:494.4px;top:23.5px;width:1px;height:2px;background:#3c3c3c"></div>
<div class="a" style="left:500.1px;top:23.5px;width:1px;height:2px;background:#3c3c3c"></div>
<div class="a" style="left:505.8px;top:23.5px;width:1px;height:2px;background:#3c3c3c"></div>
<div class="a" style="left:511.4px;top:23.5px;width:1px;height:2px;background:#3c3c3c"></div>
<div class="a" style="left:522.7px;top:23.5px;width:1px;height:2px;background:#3c3c3c"></div>
<div class="a" style="left:528.4px;top:23.5px;width:1px;height:2px;background:#3c3c3c"></div>
<div class="a" style="left:534.1px;top:23.5px;width:1px;height:2px;background:#3c3c3c"></div>
<div class="a" style="left:539.7px;top:23.5px;width:1px;height:2px;background:#3c3c3c"></div>
<div class="a" style="left:545.4px;top:21.5px;width:1px;height:4px;background:#3c3c3c"></div>
<div class="a" style="left:551.1px;top:23.5px;width:1px;height:2px;background:#3c3c3c"></div>
<div class="a" style="left:556.7px;top:23.5px;width:1px;height:2px;background:#3c3c3c"></div>
<div class="a" style="left:562.4px;top:23.5px;width:1px;height:2px;background:#3c3c3c"></div>
<div class="a" style="left:568.0px;top:23.5px;width:1px;height:2px;background:#3c3c3c"></div>
<div class="a" style="left:579.4px;top:23.5px;width:1px;height:2px;background:#3c3c3c"></div>
<div class="a" style="left:585.0px;top:23.5px;width:1px;height:2px;background:#3c3c3c"></div>
<div class="a" style="left:590.7px;top:23.5px;width:1px;height:2px;background:#3c3c3c"></div>
<div class="a" style="left:596.4px;top:23.5px;width:1px;height:2px;background:#3c3c3c"></div>
<div class="a" style="left:602.0px;top:21.5px;width:1px;height:4px;background:#3c3c3c"></div>
<div class="a" style="left:607.7px;top:23.5px;width:1px;height:2px;background:#3c3c3c"></div>
<div class="a" style="left:613.3px;top:23.5px;width:1px;height:2px;background:#3c3c3c"></div>
<div class="a" style="left:619.0px;top:23.5px;width:1px;height:2px;background:#3c3c3c"></div>
<div class="a" style="left:624.7px;top:23.5px;width:1px;height:2px;background:#3c3c3c"></div>
<div class="a" style="left:636.0px;top:23.5px;width:1px;height:2px;background:#3c3c3c"></div>
<div class="a" style="left:641.7px;top:23.5px;width:1px;height:2px;background:#3c3c3c"></div>
<div class="a" style="left:647.3px;top:23.5px;width:1px;height:2px;background:#3c3c3c"></div>
<div class="a" style="left:653.0px;top:23.5px;width:1px;height:2px;background:#3c3c3c"></div>
<div class="a" style="left:658.6px;top:21.5px;width:1px;height:4px;background:#3c3c3c"></div>
<div class="a" style="left:664.3px;top:23.5px;width:1px;height:2px;background:#3c3c3c"></div>
<div class="a" style="left:670.0px;top:23.5px;width:1px;height:2px;background:#3c3c3c"></div>
<div class="a" style="left:675.6px;top:23.5px;width:1px;height:2px;background:#3c3c3c"></div>
<div class="a" style="left:681.3px;top:23.5px;width:1px;height:2px;background:#3c3c3c"></div>
<div class="a" style="left:692.6px;top:23.5px;width:1px;height:2px;background:#3c3c3c"></div>
<div class="a" style="left:698.3px;top:23.5px;width:1px;height:2px;background:#3c3c3c"></div>
<div class="a" style="left:703.9px;top:23.5px;width:1px;height:2px;background:#3c3c3c"></div>
<div class="a" style="left:709.6px;top:23.5px;width:1px;height:2px;background:#3c3c3c"></div>
<div class="a" style="left:715.3px;top:21.5px;width:1px;height:4px;background:#3c3c3c"></div>
<div class="a" style="left:720.9px;top:23.5px;width:1px;height:2px;background:#3c3c3c"></div>
<div class="a" style="left:726.6px;top:23.5px;width:1px;height:2px;background:#3c3c3c"></div>
<div class="a" style="left:732.2px;top:23.5px;width:1px;height:2px;background:#3c3c3c"></div>
<div class="a" style="left:737.9px;top:23.5px;width:1px;height:2px;background:#3c3c3c"></div>
<div class="a" style="left:749.2px;top:23.5px;width:1px;height:2px;background:#3c3c3c"></div>
<div class="a" style="left:754.9px;top:23.5px;width:1px;height:2px;background:#3c3c3c"></div>
<div class="a" style="left:760.6px;top:23.5px;width:1px;height:2px;background:#3c3c3c"></div>
<div class="a" style="left:766.2px;top:23.5px;width:1px;height:2px;background:#3c3c3c"></div>
<div class="a" style="left:771.9px;top:21.5px;width:1px;height:4px;background:#3c3c3c"></div>
<div class="a" style="left:777.6px;top:23.5px;width:1px;height:2px;background:#3c3c3c"></div>
<div class="a" style="left:783.2px;top:23.5px;width:1px;height:2px;background:#3c3c3c"></div>
<div class="a" style="left:788.9px;top:23.5px;width:1px;height:2px;background:#3c3c3c"></div>
<div class="a" style="left:794.5px;top:23.5px;width:1px;height:2px;background:#3c3c3c"></div>
<div class="a" style="left:805.9px;top:23.5px;width:1px;height:2px;background:#3c3c3c"></div>
<div class="a" style="left:811.5px;top:23.5px;width:1px;height:2px;background:#3c3c3c"></div>
<div class="a" style="left:817.2px;top:23.5px;width:1px;height:2px;background:#3c3c3c"></div>
<div class="a" style="left:822.9px;top:23.5px;width:1px;height:2px;background:#3c3c3c"></div>
<div class="a" style="left:828.5px;top:21.5px;width:1px;height:4px;background:#3c3c3c"></div>
<div class="a" style="left:834.2px;top:23.5px;width:1px;height:2px;background:#3c3c3c"></div>
<div class="a" style="left:839.8px;top:23.5px;width:1px;height:2px;background:#3c3c3c"></div>
<div class="a" style="left:845.5px;top:23.5px;width:1px;height:2px;background:#3c3c3c"></div>
<div class="a" style="left:851.2px;top:23.5px;width:1px;height:2px;background:#3c3c3c"></div>
<div class="a" style="left:862.5px;top:23.5px;width:1px;height:2px;background:#3c3c3c"></div>
<div class="a" style="left:868.2px;top:23.5px;width:1px;height:2px;background:#3c3c3c"></div>
<div class="a" style="left:873.8px;top:23.5px;width:1px;height:2px;background:#3c3c3c"></div>
<div class="a" style="left:879.5px;top:23.5px;width:1px;height:2px;background:#3c3c3c"></div>
<div class="a" style="left:885.1px;top:21.5px;width:1px;height:4px;background:#3c3c3c"></div>
<div class="a" style="left:890.8px;top:23.5px;width:1px;height:2px;background:#3c3c3c"></div>
<div class="a" style="left:896.5px;top:23.5px;width:1px;height:2px;background:#3c3c3c"></div>
<div class="a" style="left:902.1px;top:23.5px;width:1px;height:2px;background:#3c3c3c"></div>
<div class="a" style="left:907.8px;top:23.5px;width:1px;height:2px;background:#3c3c3c"></div>
<div class="a" style="left:919.1px;top:23.5px;width:1px;height:2px;background:#3c3c3c"></div>
<div class="a" style="left:924.8px;top:23.5px;width:1px;height:2px;background:#3c3c3c"></div>
<div class="a" style="left:930.4px;top:23.5px;width:1px;height:2px;background:#3c3c3c"></div>
<div class="a" style="left:936.1px;top:23.5px;width:1px;height:2px;background:#3c3c3c"></div>
<div class="a" style="left:941.8px;top:21.5px;width:1px;height:4px;background:#3c3c3c"></div>
<div class="a" style="left:947.4px;top:23.5px;width:1px;height:2px;background:#3c3c3c"></div>
<div class="a" style="left:953.1px;top:23.5px;width:1px;height:2px;background:#3c3c3c"></div>
<div class="a" style="left:958.8px;top:23.5px;width:1px;height:2px;background:#3c3c3c"></div>
<div class="a" style="left:964.4px;top:23.5px;width:1px;height:2px;background:#3c3c3c"></div>
<div class="a" style="left:975.7px;top:23.5px;width:1px;height:2px;background:#3c3c3c"></div>
<div class="a" style="left:981.4px;top:23.5px;width:1px;height:2px;background:#3c3c3c"></div>
<div class="a" style="left:987.1px;top:23.5px;width:1px;height:2px;background:#3c3c3c"></div>
<div class="a" style="left:992.7px;top:23.5px;width:1px;height:2px;background:#3c3c3c"></div>
<div class="a" style="left:998.4px;top:21.5px;width:1px;height:4px;background:#3c3c3c"></div>
<div class="a" style="left:1004.0px;top:23.5px;width:1px;height:2px;background:#3c3c3c"></div>
<div class="a" style="left:1009.7px;top:23.5px;width:1px;height:2px;background:#3c3c3c"></div>
<div class="a" style="left:1015.4px;top:23.5px;width:1px;height:2px;background:#3c3c3c"></div>
<div class="a" style="left:1021.0px;top:23.5px;width:1px;height:2px;background:#3c3c3c"></div>
<div class="a" style="left:1032.4px;top:23.5px;width:1px;height:2px;background:#3c3c3c"></div>
<div class="a" style="left:1038.0px;top:23.5px;width:1px;height:2px;background:#3c3c3c"></div>
<div class="a" style="left:1043.7px;top:23.5px;width:1px;height:2px;background:#3c3c3c"></div>
<div class="a" style="left:1049.4px;top:23.5px;width:1px;height:2px;background:#3c3c3c"></div>
<div class="a" style="left:1055.0px;top:21.5px;width:1px;height:4px;background:#3c3c3c"></div>
<div class="a" style="left:1060.7px;top:23.5px;width:1px;height:2px;background:#3c3c3c"></div>
<div class="a" style="left:1066.3px;top:23.5px;width:1px;height:2px;background:#3c3c3c"></div>
<div class="a" style="left:1072.0px;top:23.5px;width:1px;height:2px;background:#3c3c3c"></div>
<div class="a" style="left:1077.7px;top:23.5px;width:1px;height:2px;background:#3c3c3c"></div>
<div class="a" style="left:1089.0px;top:23.5px;width:1px;height:2px;background:#3c3c3c"></div>
<div class="a" style="left:1094.7px;top:23.5px;width:1px;height:2px;background:#3c3c3c"></div>
<div class="a" style="left:1100.3px;top:23.5px;width:1px;height:2px;background:#3c3c3c"></div>
<div class="a" style="left:1106.0px;top:23.5px;width:1px;height:2px;background:#3c3c3c"></div>
<div class="a" style="left:1111.6px;top:21.5px;width:1px;height:4px;background:#3c3c3c"></div>
<div class="a" style="left:1117.3px;top:23.5px;width:1px;height:2px;background:#3c3c3c"></div>
<div class="a" style="left:1123.0px;top:23.5px;width:1px;height:2px;background:#3c3c3c"></div>
<div class="a" style="left:1128.6px;top:23.5px;width:1px;height:2px;background:#3c3c3c"></div>
<div class="a" style="left:1134.3px;top:23.5px;width:1px;height:2px;background:#3c3c3c"></div>
<div class="a" style="left:1145.6px;top:23.5px;width:1px;height:2px;background:#3c3c3c"></div>
<div class="a" style="left:1151.3px;top:23.5px;width:1px;height:2px;background:#3c3c3c"></div>
<div class="a" style="left:1156.9px;top:23.5px;width:1px;height:2px;background:#3c3c3c"></div>
<div class="a" style="left:1162.6px;top:23.5px;width:1px;height:2px;background:#3c3c3c"></div>
<div class="a" style="left:1168.3px;top:21.5px;width:1px;height:4px;background:#3c3c3c"></div>
<div class="a" style="left:1173.9px;top:23.5px;width:1px;height:2px;background:#3c3c3c"></div>
<div class="a" style="left:1179.6px;top:23.5px;width:1px;height:2px;background:#3c3c3c"></div>
<div class="a" style="left:1185.2px;top:23.5px;width:1px;height:2px;background:#3c3c3c"></div>
<div class="a" style="left:1190.9px;top:23.5px;width:1px;height:2px;background:#3c3c3c"></div>
<div class="a" style="left:1202.2px;top:23.5px;width:1px;height:2px;background:#3c3c3c"></div>
<div class="a" style="left:1207.9px;top:23.5px;width:1px;height:2px;background:#3c3c3c"></div>
<div class="a" style="left:1213.6px;top:23.5px;width:1px;height:2px;background:#3c3c3c"></div>
<div class="a" style="left:1219.2px;top:23.5px;width:1px;height:2px;background:#3c3c3c"></div>
<div class="a" style="left:1224.9px;top:21.5px;width:1px;height:4px;background:#3c3c3c"></div>
<div class="a" style="left:1230.6px;top:23.5px;width:1px;height:2px;background:#3c3c3c"></div>
<div class="a" style="left:1236.2px;top:23.5px;width:1px;height:2px;background:#3c3c3c"></div>
<div class="a" style="left:1241.9px;top:23.5px;width:1px;height:2px;background:#3c3c3c"></div>
<div class="a" style="left:1247.5px;top:23.5px;width:1px;height:2px;background:#3c3c3c"></div>
<div class="a" style="left:1258.9px;top:23.5px;width:1px;height:2px;background:#3c3c3c"></div>
<div class="a" style="left:1264.5px;top:23.5px;width:1px;height:2px;background:#3c3c3c"></div>
<div class="a" style="left:1270.2px;top:23.5px;width:1px;height:2px;background:#3c3c3c"></div>
<div class="a" style="left:1275.9px;top:23.5px;width:1px;height:2px;background:#3c3c3c"></div>
<div class="a" style="left:1281.5px;top:21.5px;width:1px;height:4px;background:#3c3c3c"></div>
<div class="a" style="left:1287.2px;top:23.5px;width:1px;height:2px;background:#3c3c3c"></div>
<div class="a" style="left:1292.8px;top:23.5px;width:1px;height:2px;background:#3c3c3c"></div>
<div class="a" style="left:1298.5px;top:23.5px;width:1px;height:2px;background:#3c3c3c"></div>
<div class="a" style="left:0;top:0;width:25px;height:26px;background:#343434;border-right:1px solid #3a3a3a"></div>
<span class="t" style="left:25.4px;top:9.2px">0</span>
</div>
<div id="vruler" class="a">
<div class="a" style="left:0;top:6.0px;width:25px;height:1px;background:#424242"></div>
<span class="t" style="left:8.6px;top:9.1px;font-size:11.5px">3</span>
<span class="t" style="left:8.6px;top:20.1px;font-size:11.5px">0</span>
<span class="t" style="left:8.6px;top:31.1px;font-size:11.5px">0</span>
<div class="a" style="left:0;top:62.6px;width:25px;height:1px;background:#424242"></div>
<span class="t" style="left:8.6px;top:65.7px;font-size:11.5px">2</span>
<span class="t" style="left:8.6px;top:76.7px;font-size:11.5px">0</span>
<span class="t" style="left:8.6px;top:87.7px;font-size:11.5px">0</span>
<div class="a" style="left:0;top:119.3px;width:25px;height:1px;background:#424242"></div>
<span class="t" style="left:8.6px;top:122.4px;font-size:11.5px">1</span>
<span class="t" style="left:8.6px;top:133.4px;font-size:11.5px">0</span>
<span class="t" style="left:8.6px;top:144.4px;font-size:11.5px">0</span>
<div class="a" style="left:0;top:175.9px;width:25px;height:1px;background:#424242"></div>
<span class="t" style="left:8.6px;top:179.0px;font-size:11.5px">0</span>
<div class="a" style="left:0;top:232.5px;width:25px;height:1px;background:#424242"></div>
<span class="t" style="left:8.6px;top:235.6px;font-size:11.5px">1</span>
<span class="t" style="left:8.6px;top:246.6px;font-size:11.5px">0</span>
<span class="t" style="left:8.6px;top:257.6px;font-size:11.5px">0</span>
<div class="a" style="left:0;top:289.1px;width:25px;height:1px;background:#424242"></div>
<span class="t" style="left:8.6px;top:292.2px;font-size:11.5px">2</span>
<span class="t" style="left:8.6px;top:303.2px;font-size:11.5px">0</span>
<span class="t" style="left:8.6px;top:314.2px;font-size:11.5px">0</span>
<div class="a" style="left:0;top:345.8px;width:25px;height:1px;background:#424242"></div>
<span class="t" style="left:8.6px;top:348.9px;font-size:11.5px">3</span>
<span class="t" style="left:8.6px;top:359.9px;font-size:11.5px">0</span>
<span class="t" style="left:8.6px;top:370.9px;font-size:11.5px">0</span>
<div class="a" style="left:0;top:402.4px;width:25px;height:1px;background:#424242"></div>
<span class="t" style="left:8.6px;top:405.5px;font-size:11.5px">4</span>
<span class="t" style="left:8.6px;top:416.5px;font-size:11.5px">0</span>
<span class="t" style="left:8.6px;top:427.5px;font-size:11.5px">0</span>
<div class="a" style="left:0;top:459.0px;width:25px;height:1px;background:#424242"></div>
<span class="t" style="left:8.6px;top:462.1px;font-size:11.5px">5</span>
<span class="t" style="left:8.6px;top:473.1px;font-size:11.5px">0</span>
<span class="t" style="left:8.6px;top:484.1px;font-size:11.5px">0</span>
<div class="a" style="left:0;top:515.7px;width:25px;height:1px;background:#424242"></div>
<span class="t" style="left:8.6px;top:518.8px;font-size:11.5px">6</span>
<span class="t" style="left:8.6px;top:529.8px;font-size:11.5px">0</span>
<span class="t" style="left:8.6px;top:540.8px;font-size:11.5px">0</span>
<div class="a" style="left:0;top:572.3px;width:25px;height:1px;background:#424242"></div>
<span class="t" style="left:8.6px;top:575.4px;font-size:11.5px">7</span>
<span class="t" style="left:8.6px;top:586.4px;font-size:11.5px">0</span>
<span class="t" style="left:8.6px;top:597.4px;font-size:11.5px">0</span>
<div class="a" style="left:0;top:628.9px;width:25px;height:1px;background:#424242"></div>
<span class="t" style="left:8.6px;top:632.0px;font-size:11.5px">8</span>
<span class="t" style="left:8.6px;top:643.0px;font-size:11.5px">0</span>
<span class="t" style="left:8.6px;top:654.0px;font-size:11.5px">0</span>
<div class="a" style="left:0;top:685.5px;width:25px;height:1px;background:#424242"></div>
<span class="t" style="left:8.6px;top:688.6px;font-size:11.5px">9</span>
<span class="t" style="left:8.6px;top:699.6px;font-size:11.5px">0</span>
<span class="t" style="left:8.6px;top:710.6px;font-size:11.5px">0</span>
<div class="a" style="left:0;top:742.2px;width:25px;height:1px;background:#424242"></div>
<span class="t" style="left:8.6px;top:745.3px;font-size:11.5px">1</span>
<span class="t" style="left:8.6px;top:756.3px;font-size:11.5px">0</span>
<span class="t" style="left:8.6px;top:767.3px;font-size:11.5px">0</span>
<span class="t" style="left:8.6px;top:778.3px;font-size:11.5px">0</span>
<div class="a" style="left:0;top:798.8px;width:25px;height:1px;background:#424242"></div>
<span class="t" style="left:8.6px;top:801.9px;font-size:11.5px">1</span>
<span class="t" style="left:8.6px;top:812.9px;font-size:11.5px">1</span>
<span class="t" style="left:8.6px;top:823.9px;font-size:11.5px">0</span>
<span class="t" style="left:8.6px;top:834.9px;font-size:11.5px">0</span>
<div class="a" style="left:0;top:855.4px;width:25px;height:1px;background:#424242"></div>
<span class="t" style="left:8.6px;top:858.5px;font-size:11.5px">1</span>
<span class="t" style="left:8.6px;top:869.5px;font-size:11.5px">2</span>
<span class="t" style="left:8.6px;top:880.5px;font-size:11.5px">0</span>
<span class="t" style="left:8.6px;top:891.5px;font-size:11.5px">0</span>
<div class="a" style="left:22.5px;top:0.4px;width:2px;height:1px;background:#3c3c3c"></div>
<div class="a" style="left:22.5px;top:11.7px;width:2px;height:1px;background:#3c3c3c"></div>
<div class="a" style="left:22.5px;top:17.3px;width:2px;height:1px;background:#3c3c3c"></div>
<div class="a" style="left:22.5px;top:23.0px;width:2px;height:1px;background:#3c3c3c"></div>
<div class="a" style="left:22.5px;top:28.7px;width:2px;height:1px;background:#3c3c3c"></div>
<div class="a" style="left:20.5px;top:34.3px;width:4px;height:1px;background:#3c3c3c"></div>
<div class="a" style="left:22.5px;top:40.0px;width:2px;height:1px;background:#3c3c3c"></div>
<div class="a" style="left:22.5px;top:45.7px;width:2px;height:1px;background:#3c3c3c"></div>
<div class="a" style="left:22.5px;top:51.3px;width:2px;height:1px;background:#3c3c3c"></div>
<div class="a" style="left:22.5px;top:57.0px;width:2px;height:1px;background:#3c3c3c"></div>
<div class="a" style="left:22.5px;top:68.3px;width:2px;height:1px;background:#3c3c3c"></div>
<div class="a" style="left:22.5px;top:74.0px;width:2px;height:1px;background:#3c3c3c"></div>
<div class="a" style="left:22.5px;top:79.6px;width:2px;height:1px;background:#3c3c3c"></div>
<div class="a" style="left:22.5px;top:85.3px;width:2px;height:1px;background:#3c3c3c"></div>
<div class="a" style="left:20.5px;top:91.0px;width:4px;height:1px;background:#3c3c3c"></div>
<div class="a" style="left:22.5px;top:96.6px;width:2px;height:1px;background:#3c3c3c"></div>
<div class="a" style="left:22.5px;top:102.3px;width:2px;height:1px;background:#3c3c3c"></div>
<div class="a" style="left:22.5px;top:107.9px;width:2px;height:1px;background:#3c3c3c"></div>
<div class="a" style="left:22.5px;top:113.6px;width:2px;height:1px;background:#3c3c3c"></div>
<div class="a" style="left:22.5px;top:124.9px;width:2px;height:1px;background:#3c3c3c"></div>
<div class="a" style="left:22.5px;top:130.6px;width:2px;height:1px;background:#3c3c3c"></div>
<div class="a" style="left:22.5px;top:136.3px;width:2px;height:1px;background:#3c3c3c"></div>
<div class="a" style="left:22.5px;top:141.9px;width:2px;height:1px;background:#3c3c3c"></div>
<div class="a" style="left:20.5px;top:147.6px;width:4px;height:1px;background:#3c3c3c"></div>
<div class="a" style="left:22.5px;top:153.2px;width:2px;height:1px;background:#3c3c3c"></div>
<div class="a" style="left:22.5px;top:158.9px;width:2px;height:1px;background:#3c3c3c"></div>
<div class="a" style="left:22.5px;top:164.6px;width:2px;height:1px;background:#3c3c3c"></div>
<div class="a" style="left:22.5px;top:170.2px;width:2px;height:1px;background:#3c3c3c"></div>
<div class="a" style="left:22.5px;top:181.6px;width:2px;height:1px;background:#3c3c3c"></div>
<div class="a" style="left:22.5px;top:187.2px;width:2px;height:1px;background:#3c3c3c"></div>
<div class="a" style="left:22.5px;top:192.9px;width:2px;height:1px;background:#3c3c3c"></div>
<div class="a" style="left:22.5px;top:198.5px;width:2px;height:1px;background:#3c3c3c"></div>
<div class="a" style="left:20.5px;top:204.2px;width:4px;height:1px;background:#3c3c3c"></div>
<div class="a" style="left:22.5px;top:209.9px;width:2px;height:1px;background:#3c3c3c"></div>
<div class="a" style="left:22.5px;top:215.5px;width:2px;height:1px;background:#3c3c3c"></div>
<div class="a" style="left:22.5px;top:221.2px;width:2px;height:1px;background:#3c3c3c"></div>
<div class="a" style="left:22.5px;top:226.9px;width:2px;height:1px;background:#3c3c3c"></div>
<div class="a" style="left:22.5px;top:238.2px;width:2px;height:1px;background:#3c3c3c"></div>
<div class="a" style="left:22.5px;top:243.8px;width:2px;height:1px;background:#3c3c3c"></div>
<div class="a" style="left:22.5px;top:249.5px;width:2px;height:1px;background:#3c3c3c"></div>
<div class="a" style="left:22.5px;top:255.2px;width:2px;height:1px;background:#3c3c3c"></div>
<div class="a" style="left:20.5px;top:260.8px;width:4px;height:1px;background:#3c3c3c"></div>
<div class="a" style="left:22.5px;top:266.5px;width:2px;height:1px;background:#3c3c3c"></div>
<div class="a" style="left:22.5px;top:272.2px;width:2px;height:1px;background:#3c3c3c"></div>
<div class="a" style="left:22.5px;top:277.8px;width:2px;height:1px;background:#3c3c3c"></div>
<div class="a" style="left:22.5px;top:283.5px;width:2px;height:1px;background:#3c3c3c"></div>
<div class="a" style="left:22.5px;top:294.8px;width:2px;height:1px;background:#3c3c3c"></div>
<div class="a" style="left:22.5px;top:300.5px;width:2px;height:1px;background:#3c3c3c"></div>
<div class="a" style="left:22.5px;top:306.1px;width:2px;height:1px;background:#3c3c3c"></div>
<div class="a" style="left:22.5px;top:311.8px;width:2px;height:1px;background:#3c3c3c"></div>
<div class="a" style="left:20.5px;top:317.5px;width:4px;height:1px;background:#3c3c3c"></div>
<div class="a" style="left:22.5px;top:323.1px;width:2px;height:1px;background:#3c3c3c"></div>
<div class="a" style="left:22.5px;top:328.8px;width:2px;height:1px;background:#3c3c3c"></div>
<div class="a" style="left:22.5px;top:334.4px;width:2px;height:1px;background:#3c3c3c"></div>
<div class="a" style="left:22.5px;top:340.1px;width:2px;height:1px;background:#3c3c3c"></div>
<div class="a" style="left:22.5px;top:351.4px;width:2px;height:1px;background:#3c3c3c"></div>
<div class="a" style="left:22.5px;top:357.1px;width:2px;height:1px;background:#3c3c3c"></div>
<div class="a" style="left:22.5px;top:362.8px;width:2px;height:1px;background:#3c3c3c"></div>
<div class="a" style="left:22.5px;top:368.4px;width:2px;height:1px;background:#3c3c3c"></div>
<div class="a" style="left:20.5px;top:374.1px;width:4px;height:1px;background:#3c3c3c"></div>
<div class="a" style="left:22.5px;top:379.8px;width:2px;height:1px;background:#3c3c3c"></div>
<div class="a" style="left:22.5px;top:385.4px;width:2px;height:1px;background:#3c3c3c"></div>
<div class="a" style="left:22.5px;top:391.1px;width:2px;height:1px;background:#3c3c3c"></div>
<div class="a" style="left:22.5px;top:396.7px;width:2px;height:1px;background:#3c3c3c"></div>
<div class="a" style="left:22.5px;top:408.1px;width:2px;height:1px;background:#3c3c3c"></div>
<div class="a" style="left:22.5px;top:413.7px;width:2px;height:1px;background:#3c3c3c"></div>
<div class="a" style="left:22.5px;top:419.4px;width:2px;height:1px;background:#3c3c3c"></div>
<div class="a" style="left:22.5px;top:425.0px;width:2px;height:1px;background:#3c3c3c"></div>
<div class="a" style="left:20.5px;top:430.7px;width:4px;height:1px;background:#3c3c3c"></div>
<div class="a" style="left:22.5px;top:436.4px;width:2px;height:1px;background:#3c3c3c"></div>
<div class="a" style="left:22.5px;top:442.0px;width:2px;height:1px;background:#3c3c3c"></div>
<div class="a" style="left:22.5px;top:447.7px;width:2px;height:1px;background:#3c3c3c"></div>
<div class="a" style="left:22.5px;top:453.4px;width:2px;height:1px;background:#3c3c3c"></div>
<div class="a" style="left:22.5px;top:464.7px;width:2px;height:1px;background:#3c3c3c"></div>
<div class="a" style="left:22.5px;top:470.4px;width:2px;height:1px;background:#3c3c3c"></div>
<div class="a" style="left:22.5px;top:476.0px;width:2px;height:1px;background:#3c3c3c"></div>
<div class="a" style="left:22.5px;top:481.7px;width:2px;height:1px;background:#3c3c3c"></div>
<div class="a" style="left:20.5px;top:487.3px;width:4px;height:1px;background:#3c3c3c"></div>
<div class="a" style="left:22.5px;top:493.0px;width:2px;height:1px;background:#3c3c3c"></div>
<div class="a" style="left:22.5px;top:498.7px;width:2px;height:1px;background:#3c3c3c"></div>
<div class="a" style="left:22.5px;top:504.3px;width:2px;height:1px;background:#3c3c3c"></div>
<div class="a" style="left:22.5px;top:510.0px;width:2px;height:1px;background:#3c3c3c"></div>
<div class="a" style="left:22.5px;top:521.3px;width:2px;height:1px;background:#3c3c3c"></div>
<div class="a" style="left:22.5px;top:527.0px;width:2px;height:1px;background:#3c3c3c"></div>
<div class="a" style="left:22.5px;top:532.6px;width:2px;height:1px;background:#3c3c3c"></div>
<div class="a" style="left:22.5px;top:538.3px;width:2px;height:1px;background:#3c3c3c"></div>
<div class="a" style="left:20.5px;top:544.0px;width:4px;height:1px;background:#3c3c3c"></div>
<div class="a" style="left:22.5px;top:549.6px;width:2px;height:1px;background:#3c3c3c"></div>
<div class="a" style="left:22.5px;top:555.3px;width:2px;height:1px;background:#3c3c3c"></div>
<div class="a" style="left:22.5px;top:561.0px;width:2px;height:1px;background:#3c3c3c"></div>
<div class="a" style="left:22.5px;top:566.6px;width:2px;height:1px;background:#3c3c3c"></div>
<div class="a" style="left:22.5px;top:577.9px;width:2px;height:1px;background:#3c3c3c"></div>
<div class="a" style="left:22.5px;top:583.6px;width:2px;height:1px;background:#3c3c3c"></div>
<div class="a" style="left:22.5px;top:589.3px;width:2px;height:1px;background:#3c3c3c"></div>
<div class="a" style="left:22.5px;top:594.9px;width:2px;height:1px;background:#3c3c3c"></div>
<div class="a" style="left:20.5px;top:600.6px;width:4px;height:1px;background:#3c3c3c"></div>
<div class="a" style="left:22.5px;top:606.3px;width:2px;height:1px;background:#3c3c3c"></div>
<div class="a" style="left:22.5px;top:611.9px;width:2px;height:1px;background:#3c3c3c"></div>
<div class="a" style="left:22.5px;top:617.6px;width:2px;height:1px;background:#3c3c3c"></div>
<div class="a" style="left:22.5px;top:623.2px;width:2px;height:1px;background:#3c3c3c"></div>
<div class="a" style="left:22.5px;top:634.6px;width:2px;height:1px;background:#3c3c3c"></div>
<div class="a" style="left:22.5px;top:640.2px;width:2px;height:1px;background:#3c3c3c"></div>
<div class="a" style="left:22.5px;top:645.9px;width:2px;height:1px;background:#3c3c3c"></div>
<div class="a" style="left:22.5px;top:651.6px;width:2px;height:1px;background:#3c3c3c"></div>
<div class="a" style="left:20.5px;top:657.2px;width:4px;height:1px;background:#3c3c3c"></div>
<div class="a" style="left:22.5px;top:662.9px;width:2px;height:1px;background:#3c3c3c"></div>
<div class="a" style="left:22.5px;top:668.5px;width:2px;height:1px;background:#3c3c3c"></div>
<div class="a" style="left:22.5px;top:674.2px;width:2px;height:1px;background:#3c3c3c"></div>
<div class="a" style="left:22.5px;top:679.9px;width:2px;height:1px;background:#3c3c3c"></div>
<div class="a" style="left:22.5px;top:691.2px;width:2px;height:1px;background:#3c3c3c"></div>
<div class="a" style="left:22.5px;top:696.9px;width:2px;height:1px;background:#3c3c3c"></div>
<div class="a" style="left:22.5px;top:702.5px;width:2px;height:1px;background:#3c3c3c"></div>
<div class="a" style="left:22.5px;top:708.2px;width:2px;height:1px;background:#3c3c3c"></div>
<div class="a" style="left:20.5px;top:713.8px;width:4px;height:1px;background:#3c3c3c"></div>
<div class="a" style="left:22.5px;top:719.5px;width:2px;height:1px;background:#3c3c3c"></div>
<div class="a" style="left:22.5px;top:725.2px;width:2px;height:1px;background:#3c3c3c"></div>
<div class="a" style="left:22.5px;top:730.8px;width:2px;height:1px;background:#3c3c3c"></div>
<div class="a" style="left:22.5px;top:736.5px;width:2px;height:1px;background:#3c3c3c"></div>
<div class="a" style="left:22.5px;top:747.8px;width:2px;height:1px;background:#3c3c3c"></div>
<div class="a" style="left:22.5px;top:753.5px;width:2px;height:1px;background:#3c3c3c"></div>
<div class="a" style="left:22.5px;top:759.1px;width:2px;height:1px;background:#3c3c3c"></div>
<div class="a" style="left:22.5px;top:764.8px;width:2px;height:1px;background:#3c3c3c"></div>
<div class="a" style="left:20.5px;top:770.5px;width:4px;height:1px;background:#3c3c3c"></div>
<div class="a" style="left:22.5px;top:776.1px;width:2px;height:1px;background:#3c3c3c"></div>
<div class="a" style="left:22.5px;top:781.8px;width:2px;height:1px;background:#3c3c3c"></div>
<div class="a" style="left:22.5px;top:787.5px;width:2px;height:1px;background:#3c3c3c"></div>
<div class="a" style="left:22.5px;top:793.1px;width:2px;height:1px;background:#3c3c3c"></div>
<div class="a" style="left:22.5px;top:804.4px;width:2px;height:1px;background:#3c3c3c"></div>
<div class="a" style="left:22.5px;top:810.1px;width:2px;height:1px;background:#3c3c3c"></div>
<div class="a" style="left:22.5px;top:815.8px;width:2px;height:1px;background:#3c3c3c"></div>
<div class="a" style="left:22.5px;top:821.4px;width:2px;height:1px;background:#3c3c3c"></div>
<div class="a" style="left:20.5px;top:827.1px;width:4px;height:1px;background:#3c3c3c"></div>
<div class="a" style="left:22.5px;top:832.8px;width:2px;height:1px;background:#3c3c3c"></div>
<div class="a" style="left:22.5px;top:838.4px;width:2px;height:1px;background:#3c3c3c"></div>
<div class="a" style="left:22.5px;top:844.1px;width:2px;height:1px;background:#3c3c3c"></div>
<div class="a" style="left:22.5px;top:849.7px;width:2px;height:1px;background:#3c3c3c"></div>
<div class="a" style="left:2px;top:337px;width:14px;height:2px;background:#a8a8a8"></div>
</div>
<div id="tools" class="a">
<div class="a" style="left:0;top:0;width:55px;height:15px;background:#2d2d2d"></div>
<div class="a" style="left:0;top:15px;width:55px;height:1px;background:#2a2a2a"></div>
<div class="a" style="left:0;top:0;width:1px;height:917px;background:#2e2e2e"></div>
<svg style="left:0;top:0" width="55" height="917" viewBox="0 117 55 917">
<g fill="none" stroke="#a0a0a0" stroke-width="1.4" stroke-linecap="round" stroke-linejoin="round">
<!-- collapse chevrons -->
<path d="M7.5 121.6 L10.2 124.2 L7.5 126.8 M11.8 121.6 L14.5 124.2 L11.8 126.8" stroke-width="1.1" stroke="#b0b0b0"/>
<!-- gripper -->
<path d="M16.5 136 V141 M18.5 136 V141 M20.5 136 V141 M22.5 136 V141 M24.5 136 V141 M26.5 136 V141 M28.5 136 V141 M30.5 136 V141 M32.5 136 V141 M34.5 136 V141 M36.5 136 V141" stroke="#2f2f2f" stroke-width="1" stroke-linecap="butt"/>
<!-- move -->
<g stroke-width="1.7"><path d="M25.7 162 V178.4 M17.5 170.2 H33.9"/></g>
<g fill="#a0a0a0" stroke="none"><path d="M25.7 159.8 L29.3 164.2 H22.1Z M25.7 180.6 L29.3 176.2 H22.1Z M15.3 170.2 L19.7 166.6 V173.8Z M36.1 170.2 L31.7 166.6 V173.8Z"/></g>
<!-- ellipse marquee -->
<ellipse cx="26.6" cy="205.5" rx="11.2" ry="10" stroke-dasharray="5.2 2.6" stroke-width="1.3"/>
<!-- lasso -->
<path d="M21.5 247.5 C16.5 245 15.6 239.6 20.4 235.6 C25.6 231.4 35 231.6 38 236 C41 240.6 35.4 247 27.6 248 C25.6 248.2 23.6 248.2 21.8 247.6" stroke-width="1.3"/>
<circle cx="19.8" cy="248" r="2.5" stroke-width="1.2"/>
<path d="M21.6 249.6 C23 251.2 23 253.2 21.4 254.6" stroke-width="1.2"/>
<!-- object selection -->
<rect x="16.4" y="266.2" width="17.6" height="17.6" stroke-dasharray="1.3 1.45" stroke-width="1.4" stroke-linecap="butt" stroke-linejoin="miter"/>
<!-- crop -->
<g stroke-width="2.6" stroke-linecap="butt" stroke-linejoin="miter"><path d="M12.4 306.6 H16.4 M19.6 301 V319.4 H33.6 M36.6 319.4 H39.4 M19.6 306.6 H33.4 V325"/></g>
<!-- frame -->
<g stroke-width="1.4"><rect x="15.6" y="340.8" width="23" height="18"/><path d="M15.6 340.8 L38.6 358.8 M38.6 340.8 L15.6 358.8"/></g>
<!-- eyedropper -->
<path d="M29 381.6 L18.4 392.2 C17 393.6 16.4 396 17 396.6 C17.6 397.2 20 396.6 21.4 395.2 L32 384.6" stroke-width="1.3"/>
<!-- healing dashed circle -->
<path d="M16.8 424.8 A8 8 0 0 1 26.4 411" stroke-dasharray="2.6 1.8" stroke-width="1.2"/>
<!-- history brush arc -->
<path d="M16.6 525.6 C19.6 521.4 24 520.6 27.6 522.4" stroke-dasharray="2.4 1.6" stroke-width="1.2"/>
<!-- bucket -->
<path d="M24.6 593.6 L14.8 603.4 L24.6 613.2 L35.4 602.6 Z" stroke-width="1.4"/>
<path d="M26.6 600.4 C27.6 596.4 26.6 592.4 23.6 590.8 C21.6 590 20.4 591.6 21 593.6" stroke-width="1.3"/>
<!-- pen -->
<path d="M17.4 721.8 L20.8 709 L29.6 704.8 L34.6 709.8 L30.2 718.6 Z M17.8 721.4 L25.6 713.6" stroke-width="1.4"/>
<circle cx="26.6" cy="712.6" r="1.7" stroke-width="1.2"/>
<path d="M30.6 703.8 L33.4 701 L38.2 705.800 L35.4 708.600 Z" fill="#a0a0a0" stroke-width="1"/>
<!-- zoom -->
<circle cx="23.6" cy="888.4" r="8.4" stroke-width="1.6"/>
<path d="M29.8 894.8 L37.4 902" stroke-width="2.4"/>
</g>
<g fill="#a0a0a0">
<!-- flyout corner triangles -->
<path d="M44 180 V183.4 H40.6Z M44 216 V219.4 H40.6Z M44 252 V255.4 H40.6Z M44 288.4 V291.8 H40.6Z M44 324.4 V327.8 H40.6Z M44 396.4 V399.8 H40.6Z M44 432.4 V435.8 H40.6Z M44 468.6 V472 H40.6Z M44 504.6 V508 H40.6Z M44 540.8 V544.2 H40.6Z M44 612.8 V616.2 H40.6Z M44 649 V652.4 H40.6Z M44 685 V688.4 H40.6Z M44 721.2 V724.6 H40.6Z M44 757.2 V760.6 H40.6Z M44 793.4 V796.8 H40.6Z M44 829.4 V832.8 H40.6Z M44 865.6 V869 H40.6Z M44 937.8 V941.2 H40.6Z"/>
<!-- object selection inner + arrow -->
<path d="M20.2 270.400 H30 V276.400 H27.6 V280 H20.2Z"/>
<path d="M28.8 276.400 L38.8 286.200 H33.2 L29 290.800Z" stroke="#383838" stroke-width="0.9"/>
<!-- frame handles -->
<circle cx="15.6" cy="340.8" r="1.7"/><circle cx="38.6" cy="340.8" r="1.7"/><circle cx="15.6" cy="358.8" r="1.7"/><circle cx="38.6" cy="358.8" r="1.7"/>
<!-- eyedropper head -->
<path d="M27 380.6 L29.4 378.2 L30.8 379.6 L33.6 376 C35 374.4 37.2 374.6 37.8 375.6 C38.6 376.6 38.6 378.6 37 380 L33.6 383 L35 384.4 L32.6 386.8Z"/>
<!-- healing bandage -->
<g transform="rotate(-40 27 422.4)"><rect x="13.6" y="417" width="26.8" height="10.8" rx="5.4"/><g fill="#383838"><circle cx="23.6" cy="420.2" r="1.2"/><circle cx="27" cy="420.2" r="1.2"/><circle cx="30.4" cy="420.2" r="1.2"/><circle cx="23.6" cy="424.6" r="1.2"/><circle cx="27" cy="424.6" r="1.2"/><circle cx="30.4" cy="424.6" r="1.2"/></g></g>
<!-- brush -->
<path d="M35.6 448.4 C36.6 449 36.6 450.4 36 451.6 L27.4 463 L24 460.4 L32.4 449 C33.4 447.8 34.8 447.8 35.6 448.4Z"/>
<path d="M23 461.6 L26.2 464 C26.6 468 22 470.6 15.4 469.8 C18.6 468.4 18.4 462.4 23 461.6Z"/>
<!-- stamp -->
<path d="M27.8 484.2 C30.8 484.2 32.6 486.4 32.6 488.8 C32.6 491 31 492.2 30.6 494.2 L30.4 497.4 H36.6 C37.8 497.4 38.4 498 38.4 499.2 V502.6 H17.2 V499.2 C17.2 498 17.8 497.4 19 497.4 H25.2 L25 494.2 C24.6 492.2 23 491 23 488.8 C23 486.4 24.8 484.2 27.8 484.2Z"/>
<rect x="17.6" y="504.6" width="20.4" height="1.7"/>
<!-- history brush -->
<path d="M37 520.4 C38 521 38 522.4 37.4 523.6 L29.6 535.4 L26.4 533 L34 521.2 C34.8 520 36.2 519.8 37 520.4Z"/>
<path d="M25.4 534.2 L28.4 536.4 C28.8 540.2 24.6 542.8 18.4 542 C21.4 540.6 21 535 25.4 534.2Z"/>
<path d="M13.4 527.6 L19.6 527.2 L16 522.6Z"/>
<circle cx="33.6" cy="535" r="0.7"/><circle cx="35.2" cy="531.6" r="0.7"/><circle cx="32" cy="538.6" r="0.7"/>
<!-- bucket drop -->
<circle cx="27" cy="600.6" r="1.5"/>
<path d="M37.6 603.6 C39.4 606.6 40.6 608.4 40.6 610 C40.6 611.8 39.2 613 37.6 613 C36 613 34.6 611.8 34.6 610 C34.6 608.4 35.8 606.6 37.6 603.6Z"/>
<!-- blur drop -->
<path d="M26.8 627 C30.4 632.4 34.4 636.8 34.4 641.2 C34.4 645.6 31 648.6 26.8 648.6 C22.6 648.6 19.2 645.6 19.2 641.2 C19.2 636.8 23.2 632.4 26.8 627Z"/>
<!-- burn hand -->
<path d="M14.8 673.6 C14.6 669.4 18.6 665.8 24.4 665.6 C28.4 665.4 30.6 667 33 669.4 L37.6 673.4 C38.6 674.4 38.6 675.6 38 676.6 L35.6 683 C32.6 683.8 29.6 683 27.6 681.6 C25.6 682.4 22.6 682.2 20.8 680.8 C18.8 680.6 17.4 679.4 17.4 677.6 C15.8 677 14.8 675.6 14.8 673.6Z"/>
<circle cx="23.4" cy="673.6" r="3.4" fill="#383838"/>
<!-- T -->
<path d="M19 737 H36.2 V742.2 H34.6 C34.4 740.2 33.8 739.4 32 739.4 H29.2 V755 C29.2 756.6 29.8 757 32 757.2 V758.8 H23.2 V757.2 C25.4 757 26 756.6 26 755 V739.4 H23.2 C21.4 739.4 20.8 740.2 20.6 742.2 H19Z"/>
<!-- rectangle -->
<rect x="15" y="809" width="22.8" height="17.8" fill="#4b4b4b" stroke="#a0a0a0" stroke-width="1.5"/>
<!-- hand -->
<path d="M22 866.6 C19.6 863.8 17.6 860.6 15.4 857.6 C14.6 856.4 15 855.2 16 854.8 C17 854.4 18 854.8 18.8 855.8 L21.2 858.6 V847.6 C21.2 846.4 21.8 845.8 22.8 845.8 C23.8 845.8 24.4 846.4 24.4 847.6 V854 H25 V845.2 C25 844 25.6 843.4 26.6 843.4 C27.6 843.4 28.2 844 28.2 845.2 V854 H28.8 V846.4 C28.8 845.2 29.4 844.6 30.4 844.6 C31.4 844.6 32 845.2 32 846.4 V855 H32.6 V849.6 C32.6 848.4 33.2 847.8 34.2 847.8 C35.2 847.8 35.8 848.4 35.8 849.6 V858.6 C35.8 862.4 34.6 864.6 33 866.6Z"/>
<!-- dots -->
<circle cx="17.6" cy="927.4" r="2.7"/><circle cx="26.4" cy="927.4" r="2.7"/><circle cx="35.2" cy="927.4" r="2.7"/>
</g>
<!-- path selection arrow -->
<path d="M20.6 772.6 L34.4 786.4 H28.8 L31.8 793.4 L28.8 794.8 L25.8 787.8 L20.6 792.4Z" fill="#0a0a0a" stroke="#a0a0a0" stroke-width="1.3" stroke-linejoin="miter"/>
<!-- default colors -->
<rect x="10.2" y="958.2" width="8.4" height="8.4" fill="#d0d0d0" stroke="#111" stroke-width="1"/>
<rect x="5.4" y="953.2" width="9.2" height="9.2" fill="#050505" stroke="#c8c8c8" stroke-width="1"/>
<!-- swap -->
<path d="M34.6 956.4 C39.6 956.4 41.8 958.6 41.8 963" fill="none" stroke="#a0a0a0" stroke-width="1.8"/>
<path d="M31.6 956.4 L36.2 952.8 V960Z M41.8 966.6 L38.2 962 H45.4Z" fill="#a0a0a0"/>
<!-- fg/bg -->
<rect x="20.4" y="989" width="24.6" height="24.6" fill="#000" stroke="#c0c0c0" stroke-width="1.2"/>
<rect x="6.6" y="975.8" width="24.6" height="24.6" fill="#8e0a08" stroke="#c0c0c0" stroke-width="1.2"/>
<!-- quick mask -->
<rect x="13.6" y="1030.2" width="24.6" height="10" fill="none" stroke="#a0a0a0" stroke-width="1.4"/>
</svg>
<!-- selected eraser tool -->
<div class="a" style="left:2px;top:432px;width:47px;height:35px;background:#2b2b2b;border:3.5px solid #e8632e"></div>
<svg style="left:0;top:432px" width="55" height="36" viewBox="0 549 55 36">
<g transform="translate(26.4 566) rotate(-38)"><rect x="-10.6" y="-5.2" width="21.2" height="10.4" rx="1" fill="none" stroke="#efefef" stroke-width="1.5"/><rect x="-2" y="-5.2" width="12.6" height="10.4" fill="#efefef"/></g>
<path d="M21.6 575.8 H37.8" stroke="#efefef" stroke-width="1.5"/>
<path d="M44.4 577.6 V581.2 H40.8Z" fill="#e0e0e0"/>
</svg>
</div>
<div id="panels" class="a">
<div class="a" style="left:0.7px;top:0;width:215px;height:917px">
<div class="a" style="left:-1px;top:0;width:217px;height:15px;background:#2d2d2d"></div>
<!-- COLOR panel: panel top abs y=117 -->
<div class="ptabs" style="top:15px">
<div class="ptab on" style="left:0;width:59px;padding-left:12px">Color</div>
<div class="ptab" style="left:59px;width:85px;padding-left:10px">Swatches</div>
<div class="ptab" style="left:144px;width:90px;border-right:0">Gradients</div>
</div>
<!-- fg/bg -->
<div class="a" style="left:26.7px;top:75.6px;width:26.5px;height:26.5px;background:#000;border:1.2px solid #bdbdbd;box-shadow:0 0 0 1px #2a2a2a"></div>
<div class="a" style="left:12.1px;top:60.4px;width:29.2px;height:29.2px;background:#2b2b2b;border:1px solid #616161"></div><div class="a" style="left:14.1px;top:62.4px;width:25.2px;height:25.2px;background:#960c0b;border:1.1px solid #c8c8c8"></div>
<svg style="left:11px;top:123px" width="16" height="15" viewBox="0 0 16 15"><path d="M8 0.6 L15.4 14.4 H0.6Z" fill="#a9a9a9"/><rect x="7.1" y="4.6" width="1.8" height="5.4" fill="#383838"/><rect x="7.1" y="11" width="1.8" height="1.8" fill="#383838"/></svg>
<div class="a" style="left:29.5px;top:123.5px;width:15px;height:15px;background:#a5141c;border:1.2px solid #bdbdbd"></div>
<!-- colour field -->
<div class="a" style="left:62.6px;top:57.3px;width:283px;height:276.2px;background:linear-gradient(to bottom,rgba(0,0,0,0) 0%,rgba(0,0,0,0.97) 100%),linear-gradient(to right,#b9b9b9 0%,#b90000 100%)"></div>

<!-- PROPERTIES panel -->
<div class="a" style="left:-1px;top:356px;width:217px;height:2px;background:#272727"></div>
<div class="ptabs" style="top:358px">
<div class="ptab on" style="left:0;width:93px;font-size:14px;line-height:35px;padding-left:11.4px">Properties</div>
<div class="ptab" style="left:93px;width:108px;font-size:14px;padding-left:11px;line-height:35px">Adjustments</div>
<div class="ptab" style="left:201px;width:40px;font-size:14px;border-right:0">Libraries</div>
</div>
<div class="a" style="left:13px;top:400px;width:26px;height:26px;background:#2a2a2a;border:1px solid #303030"></div>
<svg style="left:16px;top:404px" width="20" height="18" viewBox="0 0 20 18"><rect x="0.7" y="0.7" width="18.6" height="16.6" fill="none" stroke="#a4a4a4" stroke-width="1.4"/><path d="M2 15.6 V12 L4 10 L5 11 L6 8 L7 9 L8.4 5.4 L10 9 L11 8 L12 10.6 L14 9.6 L15 12 L18 13 V15.6Z" fill="#a4a4a4"/><rect x="13.2" y="3.4" width="3" height="3" fill="#a4a4a4"/></svg>
<span class="t" style="left:45.5px;top:408px;font-size:14.5px;color:#b0b0b0">Pixel Layer</span>
<div class="a" style="left:-1px;top:433px;width:217px;height:1px;background:#2b2b2b"></div>
<svg style="left:8px;top:450px" width="11" height="7" viewBox="0 0 11 7"><path d="M1 1 L5.5 5.6 L10 1" fill="none" stroke="#a9a9a9" stroke-width="1.3"/></svg>
<span class="t" style="left:25.5px;top:445.9px;font-size:15px;font-weight:bold;color:#bcbcbc">Transform</span>
<div class="a" style="left:11px;top:487px;width:28px;height:30px;background:#2a2a2a"></div>
<svg style="left:19px;top:491px" width="12" height="22" viewBox="0 0 12 22"><g fill="none" stroke="#b4b4b4" stroke-width="1.5"><path d="M2 8.6 V5.6 A4 4 0 0 1 10 5.6 V8.6"/><path d="M2 12.6 V16 A4 4 0 0 0 10 16 V12.6"/><path d="M6 6.6 V15"/></g></svg>
<span class="t" style="left:50.5px;top:479.5px;font-size:14.5px;color:#a9a9a9">W</span>
<div class="box" style="left:70px;top:475.5px;width:86px;height:21px;border-radius:2px"></div>
<span class="t" style="left:75px;top:479.5px;font-size:14.5px;color:#bcbcbc">1920 px</span>
<span class="t" style="left:166.5px;top:479.5px;font-size:14.5px;color:#a9a9a9">X</span>
<div class="box" style="left:183px;top:475.5px;width:60px;height:21px;border-radius:2px"></div>
<span class="t" style="left:187px;top:479.5px;font-size:14.5px;color:#bcbcbc">0 px</span>
<span class="t" style="left:53.5px;top:510px;font-size:14.5px;color:#a9a9a9">H</span>
<div class="box" style="left:70px;top:507px;width:86px;height:21px;border-radius:2px"></div>
<span class="t" style="left:75px;top:510.5px;font-size:14.5px;color:#bcbcbc">1080 px</span>
<span class="t" style="left:166.5px;top:510.5px;font-size:14.5px;color:#a9a9a9">Y</span>
<div class="box" style="left:183px;top:507px;width:60px;height:21px;border-radius:2px"></div>
<span class="t" style="left:187px;top:510.5px;font-size:14.5px;color:#bcbcbc">0 px</span>
<svg style="left:45px;top:546px" width="17" height="12" viewBox="0 0 17 12"><path d="M13 1.2 L1.6 10.6 H16" fill="none" stroke="#a9a9a9" stroke-width="1.2"/><path d="M8.2 5.4 A6.5 6.5 0 0 1 10.4 10.6" fill="none" stroke="#a9a9a9" stroke-width="1.1"/></svg>
<div class="box" style="left:68.5px;top:540.5px;width:81px;height:23px;border-radius:2px"></div>
<div class="a" style="left:131px;top:541.5px;width:1px;height:21px;background:#474747"></div>
<span class="t" style="left:72.5px;top:545.5px;font-size:14.5px;color:#bcbcbc">0,00°</span>
<svg style="left:135px;top:549px" width="11" height="7" viewBox="0 0 11 7"><path d="M1 1 L5.5 5.6 L10 1" fill="none" stroke="#a9a9a9" stroke-width="1.3"/></svg>
<svg style="left:200px;top:545px" width="16" height="16" viewBox="0 0 16 16"><path d="M1.4 2 L7.4 8 L1.4 14Z" fill="none" stroke="#a9a9a9" stroke-width="1.2"/><path d="M10.6 0.6 V15.6" stroke="#a9a9a9" stroke-width="1" stroke-dasharray="1.2 1.4"/></svg>
<div class="a" style="left:-1px;top:579px;width:217px;height:1px;background:#2b2b2b"></div>
<svg style="left:8px;top:598px" width="11" height="7" viewBox="0 0 11 7"><path d="M1 1 L5.5 5.6 L10 1" fill="none" stroke="#a9a9a9" stroke-width="1.3"/></svg>
<span class="t" style="left:25.5px;top:593.8px;font-size:15px;font-weight:bold;color:#bcbcbc">Align and Distribute</span>
<span class="t" style="left:9.5px;top:625px;font-size:14.5px;color:#a9a9a9">Align:</span>
<svg style="left:14px;top:655px" width="201" height="14" viewBox="0 0 201 14"><g fill="#686868"><rect x="2" y="2.200" width="1.2" height="8.800"/><rect x="4.4" y="5" width="10" height="3.4"/><rect x="46.4" y="2.200" width="1.2" height="8.800"/><rect x="42" y="5" width="10" height="3.4"/><rect x="88.6" y="2.200" width="1.2" height="8.800"/><rect x="77.4" y="5" width="10" height="3.4"/><rect x="126.4" y="2.6" width="19" height="1.2"/><rect x="129" y="5" width="5" height="3.4"/><rect x="137" y="5" width="5" height="3.4"/><rect x="164" y="4.6" width="5.4" height="3.8"/><rect x="172" y="7" width="7" height="1.4"/><rect x="197.6" y="3" width="4" height="5.4"/></g></svg>

<!-- LAYERS panel -->
<div class="a" style="left:-1px;top:699.5px;width:217px;height:2px;background:#272727"></div>
<div class="ptabs" style="top:702.5px;height:34px">
<div class="ptab on" style="left:0;width:67px;font-size:14px;height:34px;line-height:32.4px;padding-left:10.8px;letter-spacing:-0.12px">Layers</div>
<div class="ptab" style="left:67px;width:85px;font-size:14px;padding-left:10px;height:34px;line-height:32.4px">Channels</div>
<div class="ptab" style="left:152px;width:62px;font-size:14px;height:34px;line-height:32.4px">Paths</div>
</div>
<div class="box" style="left:4.5px;top:748px;width:119px;height:24px;background:#2c2c2c;border-color:#404040"></div>
<svg style="left:14px;top:753px" width="13" height="14" viewBox="0 0 13 14"><circle cx="5.2" cy="5.6" r="4" fill="none" stroke="#b0b0b0" stroke-width="1.4"/><path d="M8 8.8 L11.6 12.8" stroke="#b0b0b0" stroke-width="1.8" stroke-linecap="round"/></svg>
<span class="t" style="left:30px;top:752.5px;font-size:15px;color:#bcbcbc">Kind</span>
<svg style="left:110px;top:757.5px" width="10" height="7" viewBox="0 0 11 7"><path d="M1 1 L5.5 5.6 L10 1" fill="none" stroke="#b0b0b0" stroke-width="1.4"/></svg>
<svg style="left:140px;top:752px" width="76" height="17" viewBox="0 0 76 17"><rect x="1.4" y="1.4" width="16.8" height="13.4" fill="none" stroke="#a4a4a4" stroke-width="1.3"/><path d="M3.6 12.6 L7.4 7 L10 10.2 L12.4 7.6 L16 12.6Z" fill="#a4a4a4"/><circle cx="38.6" cy="8.2" r="7.2" fill="none" stroke="#a4a4a4" stroke-width="1.3"/><path d="M33.5 13.3 A7.2 7.2 0 0 0 43.7 3.1Z" fill="#a4a4a4"/><path d="M60 1.6 H76 V5.6 H74.6 C74.4 3.8 74 3.4 72.4 3.4 H69.6 V14 H66.4 V3.4 H63.6 C62 3.4 61.6 3.8 61.4 5.6 H60Z" fill="#a4a4a4"/></svg>
<div class="a" style="left:-1px;top:776.5px;width:217px;height:1px;background:#2b2b2b"></div>
<div class="box" style="left:4.5px;top:783.5px;width:162px;height:25px;background:#2c2c2c;border-color:#404040"></div>
<span class="t" style="left:13px;top:788.5px;font-size:15px;color:#bcbcbc">Normal</span>
<svg style="left:153px;top:793.5px" width="10" height="7" viewBox="0 0 11 7"><path d="M1 1 L5.5 5.6 L10 1" fill="none" stroke="#b0b0b0" stroke-width="1.4"/></svg>
<span class="t" style="left:171px;top:788.5px;font-size:15px;color:#a9a9a9">Opacity:</span>
<div class="a" style="left:-1px;top:813px;width:217px;height:1px;background:#2b2b2b"></div>
<span class="t" style="left:6.6px;top:825.4px;font-size:15.2px;color:#a9a9a9">Lock:</span>
<svg style="left:48px;top:823px" width="126" height="19" viewBox="0 0 126 19"><g fill="#a4a4a4"><rect x="1" y="1.4" width="16" height="16" fill="none" stroke="#a4a4a4" stroke-width="1.2"/><rect x="1.6" y="2" width="5" height="5"/><rect x="11.4" y="2" width="5" height="5"/><rect x="6.6" y="7" width="4.8" height="4.8"/><rect x="1.6" y="11.8" width="5" height="5"/><rect x="11.4" y="11.8" width="5" height="5"/><path d="M44.6 0.4 C45.6 1 45.4 2.2 45 3 L38 12.4 L35.4 10.4 L42.4 1 C43 0.2 44 0 44.6 0.4Z"/><path d="M34.4 11.4 L37 13.4 C37.2 16.4 33.6 18.6 27.6 18 C30.6 16.8 30.6 12 34.4 11.4Z"/><path d="M61.2 2.6 V16 M54.4 9.4 H68" stroke="#a4a4a4" stroke-width="1.6"/><path d="M61.2 0.4 L64.2 4 H58.2Z M61.2 18.4 L64.2 14.8 H58.2Z M52.2 9.4 L55.8 6.4 V12.4Z M70.2 9.4 L66.6 6.4 V12.4Z"/><path d="M82.6 4.2 H93.6 L97.4 8 V15.4 H82.6Z" fill="none" stroke="#a4a4a4" stroke-width="1.5"/><path d="M93 4.6 V8.4 H97" fill="none" stroke="#a4a4a4" stroke-width="1.2"/><path d="M78.6 4.2 H80.6 M82.6 0.4 V2.2 M95.6 0.6 V2 M98.8 15.4 H100.4 M82.6 17 V18.6 M97.4 17 V18.6 M78.6 15.4 H80.6" stroke="#a4a4a4" stroke-width="1.3"/><rect x="107.4" y="8" width="14.6" height="10.4" rx="1"/><path d="M110.6 8 V5.4 A4.1 4.1 0 0 1 118.8 5.4 V8" fill="none" stroke="#a4a4a4" stroke-width="1.8"/><circle cx="114.7" cy="12.8" r="1.5" fill="#383838"/></g></svg>
<span class="t" style="left:205px;top:825px;font-size:14.5px;color:#a9a9a9">Fill:</span>
<!-- layer row -->
<div class="a" style="left:-1px;top:850.5px;width:217px;height:1px;background:#2e2e2e"></div>
<div class="a" style="left:35px;top:851.5px;width:180px;height:34px;background:#4b4b4b"></div>
<div class="a" style="left:-1px;top:885.5px;width:217px;height:1px;background:#2e2e2e"></div>
<div class="a" style="left:34px;top:851.5px;width:1px;height:34px;background:#303030"></div>
<svg style="left:10px;top:862px" width="17" height="12" viewBox="0 0 17 12"><path d="M1 6 C3.6 1.8 6 0.8 8.5 0.8 C11 0.8 13.4 1.8 16 6 C13.4 10.2 11 11.2 8.5 11.2 C6 11.2 3.6 10.2 1 6Z" fill="none" stroke="#bdbdbd" stroke-width="1.3"/><circle cx="8.5" cy="6" r="2.8" fill="#bdbdbd"/></svg>
<svg style="left:37px;top:855px" width="46" height="29" viewBox="0 0 46 29"><path d="M0.7 6 V0.7 H8 M38 0.7 H45.3 V6 M45.3 23 V28.3 H38 M8 28.3 H0.7 V23" fill="none" stroke="#c8c8c8" stroke-width="1.3"/><rect x="4" y="3.4" width="38" height="22" fill="#b4b4b4" stroke="#0c0c0c" stroke-width="1.2"/><path d="M5 24.4 L41 4.4" stroke="#c8c8c8" stroke-width="1.2" stroke-dasharray="1.6 1.4"/><path d="M5.4 4.6 L40.6 24.2" stroke="#8e0a08" stroke-width="2"/></svg>
<span class="t" style="left:89.5px;top:862px;font-size:14px;color:#c0c0c0">Layer 1</span>
</div>
</div>
<!-- tool flyout -->
<div class="a" style="left:50.5px;top:549.5px;width:241.5px;height:80.5px;background:#3c3c3c;box-shadow:0 0 0 0.8px #2a2a2a,2px 4px 9px rgba(0,0,0,0.5)"></div>
<div class="a" style="left:51px;top:550.3px;width:240.6px;height:27.7px;background:#6c6c6c;border:3.3px solid #e8632e"></div>
<div class="a" style="left:57.8px;top:558.2px;width:4.6px;height:4.6px;background:#f4f4f4"></div>
<svg style="left:74px;top:552px" width="24" height="74" viewBox="74 552 24 74">
<!-- row1 eraser -->
<g transform="translate(86.6 562.6) rotate(-38)"><rect x="-8" y="-4" width="16" height="8" rx="0.8" fill="none" stroke="#f0f0f0" stroke-width="1.2"/><rect x="-1.4" y="-4" width="9.4" height="8" fill="#f0f0f0"/></g>
<path d="M82.4 570.4 H94.8" stroke="#f0f0f0" stroke-width="1.2"/>
<!-- row2 bg eraser -->
<g transform="translate(88 589.4) rotate(-40)"><rect x="-8" y="-3.8" width="16" height="7.6" rx="1.4" fill="none" stroke="#a8a8a8" stroke-width="1.2"/><rect x="-1.6" y="-3.8" width="9.6" height="7.6" rx="1" fill="#a8a8a8"/></g>
<g fill="none" stroke="#a8a8a8" stroke-width="1"><circle cx="82.4" cy="579.8" r="1.5"/><circle cx="84.6" cy="583.4" r="1.5"/><path d="M76 580 L83 582.6 M77.6 586.6 L81.6 581"/></g>
<!-- row3 magic eraser -->
<g transform="translate(88 614.8) rotate(-40)"><rect x="-8" y="-3.8" width="16" height="7.6" rx="1.4" fill="none" stroke="#a8a8a8" stroke-width="1.2"/><rect x="-1.6" y="-3.8" width="9.6" height="7.6" rx="1" fill="#a8a8a8"/></g>
<g fill="#a8a8a8"><path d="M79 606 L79.9 608.5 L82.4 609.4 L79.9 610.3 L79 612.8 L78.1 610.3 L75.6 609.4 L78.1 608.500Z"/><path d="M85.6 604.6 L86.3 606.3 L88 607 L86.3 607.700 L85.6 609.4 L84.9 607.7 L83.2 607 L84.9 606.3Z"/><path d="M76.800 614.2 L77.5 615.9 L79.2 616.6 L77.5 617.3 L76.8 619 L76.1 617.3 L74.4 616.6 L76.1 615.9Z"/></g>
</svg>
<span class="t" style="left:103.3px;top:556.2px;font-size:14.7px;color:#f2f2f2">Eraser Tool</span>
<span class="t" style="left:276.4px;top:556.2px;font-size:14.7px;color:#f2f2f2">E</span>
<span class="t" style="left:103.3px;top:581.9px;font-size:14.9px;color:#aeaeae">Background Eraser Tool</span>
<span class="t" style="left:276.4px;top:581.9px;font-size:14.7px;color:#aeaeae">E</span>
<span class="t" style="left:103.3px;top:608.1px;font-size:14.9px;color:#aeaeae">Magic Eraser Tool</span>
<span class="t" style="left:276.4px;top:608.1px;font-size:14.7px;color:#aeaeae">E</span>

<!-- contextual task bar -->
<div class="a" style="left:450.3px;top:978px;width:544.7px;height:41.6px;background:#3a3a3a;border-radius:5px;box-shadow:0 0 0 1px #2a2a2a"></div>
<div class="a" style="left:454.6px;top:983px;width:4.8px;height:31.4px;border-radius:2.4px;background:#808080"></div>
<div class="a" style="left:467px;top:981.6px;width:147.4px;height:32.8px;border:1px solid #525252"></div>
<div class="a" style="left:619.6px;top:981.6px;width:189.4px;height:32.8px;border:1px solid #525252"></div>
<svg style="left:479px;top:987px" width="22" height="22" viewBox="0 0 22 22"><path d="M4 19.8 C4.6 16.4 6.6 15 8.8 14.2 C7.4 13 6.6 11.4 6.6 9.2 C6.6 6.4 8.4 4.2 11 4.2 C13.6 4.2 15.4 6.4 15.400 9.2 C15.4 11.4 14.6 13 13.2 14.2 C15.4 15 17.4 16.4 18 19.8Z" fill="#a9a9a9"/><path d="M1.400 20.4 C2 15 3.400 12.6 5.200 11.6 C4 8 5.200 1.600 11 1.600 C16.8 1.600 18 8 16.8 11.6 C18.6 12.600 20 15 20.6 20.4" fill="none" stroke="#a9a9a9" stroke-width="1" stroke-dasharray="1.6 1.6"/></svg>
<span class="t" style="left:503.4px;top:989.6px;font-size:15.5px;color:#b9b9b9">Select subject</span>
<svg style="left:632px;top:988px" width="21" height="20" viewBox="0 0 21 20"><rect x="0.700" y="0.700" width="19.6" height="17.6" fill="none" stroke="#a9a9a9" stroke-width="1.400"/><path d="M2.200 16.8 L7.6 9 L11 13.4 L14 10 L18.8 16.8Z" fill="#a9a9a9"/><path d="M3 3 H5 V5 H3Z M7 3 H9 V5 H7Z M11 3 H13 V5 H11Z M15 3 H17 V5 H15Z M5 5 H7 V7 H5Z M9 5 H11 V7 H9Z M13 5 H15 V7 H13Z M3 7 H5 V9 H3Z M15 7 H17 V9 H15Z" fill="#6a6a6a"/></svg>
<span class="t" style="left:656.6px;top:989.8px;font-size:15px;color:#b9b9b9">Remove background</span>
<svg style="left:823px;top:989px" width="24" height="19" viewBox="0 0 24 19"><rect x="0.800" y="0.800" width="22.400" height="17.400" fill="none" stroke="#a9a9a9" stroke-width="1.400" stroke-dasharray="3.2 2"/><g fill="#a9a9a9"><path d="M13.4 9 V3.800 L15.200 5.600 L18.600 2.400 L20 3.800 L16.800 7.200 L18.600 9Z"/><path d="M10.6 10 V15.200 L8.800 13.400 L5.400 16.600 L4 15.200 L7.200 11.800 L5.400 10Z"/></g></svg>
<svg style="left:870px;top:987.5px" width="21" height="21" viewBox="0 0 21 21"><circle cx="10.500" cy="10.500" r="9.400" fill="none" stroke="#a9a9a9" stroke-width="1.400"/><path d="M3.900 17.100 A9.400 9.400 0 0 0 17.100 3.900Z" fill="#a9a9a9"/></svg>
<svg style="left:915px;top:994px" width="30" height="23" viewBox="0 0 30 23"><g fill="#a9a9a9"><circle cx="3.600" cy="4" r="2.400"/><circle cx="11.800" cy="4" r="2.400"/><circle cx="20" cy="4" r="2.400"/><path d="M24.400 18.400 H28.800 L26.600 20.800Z"/></g></svg>
<svg style="left:960px;top:987px" width="24" height="22" viewBox="0 0 24 22"><g fill="none" stroke="#a9a9a9" stroke-width="1.400"><path d="M0.600 4 H4.600 M10 4 H23.400 M0.600 11 H13.600 M19 11 H23.400 M0.600 18 H4.600 M10 18 H23.400"/><circle cx="7.300" cy="4" r="2.600"/><circle cx="16.300" cy="11" r="2.600"/><circle cx="7.300" cy="18" r="2.600"/></g></svg>
</div>
</body>
</html>
